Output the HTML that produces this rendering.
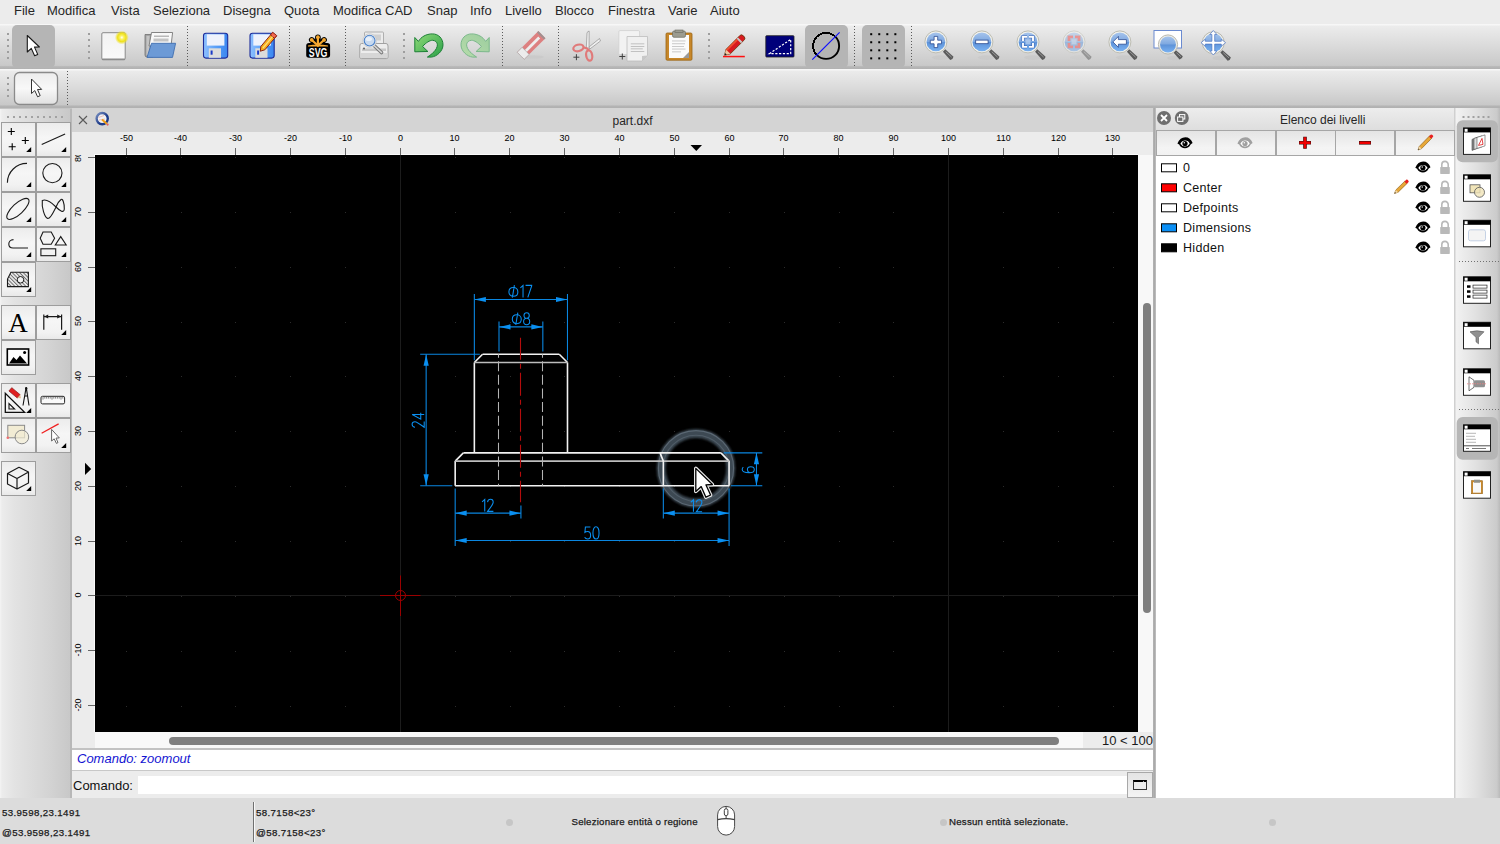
<!DOCTYPE html><html><head><meta charset="utf-8"><style>
*{box-sizing:border-box}
html,body{margin:0;padding:0}
body{width:1500px;height:844px;position:relative;overflow:hidden;background:#ececec;font-family:"Liberation Sans",sans-serif;color:#222}
.a{position:absolute}
.menu span{position:absolute;top:3px;font-size:13px;color:#262626;line-height:16px;white-space:nowrap}
.tb{position:absolute;left:0;width:1500px}
.sep{position:absolute;width:1px;border-left:1px dotted #6a6a6a}
.hd{position:absolute;width:2px;height:2px;background:#9c9c9c}
.lb{position:absolute;width:34px;height:34px;border:1px solid #9a9a9a;background:linear-gradient(#f7f7f7,#ebebeb 50%,#e6e6e6)}
.lb svg{position:absolute;left:0;top:0}
.tri{position:absolute;right:3px;bottom:3px;width:0;height:0;border-left:6px solid transparent;border-bottom:6px solid #000}
.st{position:absolute;font-size:9.7px;color:#1a1a1a;white-space:nowrap;line-height:12px;-webkit-text-stroke:0.25px #1a1a1a}
.rl{position:absolute;font-size:9px;color:#000;line-height:10px;white-space:nowrap}
.lay{position:absolute;left:1183px;font-size:12.5px;letter-spacing:0.3px;color:#111;line-height:16px}
.sw{position:absolute;left:1161px;width:16px;height:9px;border:1px solid #000}
.eye{position:absolute;left:1415px}
.lock{position:absolute;left:1440px}
</style></head><body>
<div class="a menu" style="left:0;top:0;width:1500px;height:24px;background:#ececec">
<span style="left:14px">File</span>
<span style="left:47px">Modifica</span>
<span style="left:111px">Vista</span>
<span style="left:153px">Seleziona</span>
<span style="left:223px">Disegna</span>
<span style="left:284px">Quota</span>
<span style="left:333px">Modifica CAD</span>
<span style="left:427px">Snap</span>
<span style="left:470px">Info</span>
<span style="left:505px">Livello</span>
<span style="left:555px">Blocco</span>
<span style="left:608px">Finestra</span>
<span style="left:668px">Varie</span>
<span style="left:710px">Aiuto</span>
</div>
<div class="tb" style="top:24px;height:45px;background:linear-gradient(#f7f7f7 0px,#f7f7f7 1px,#ececec 2px,#dcdcdc 45%,#c9c9c9 92%,#b6b6b6 95%,#b2b2b2 100%)"></div>
<div class="tb" style="top:69px;height:39px;background:linear-gradient(#f7f7f7 0px,#f7f7f7 1px,#ebebeb 2px,#dadada 50%,#c8c8c8 92%,#b4b4b4 95%,#b0b0b0 100%)"></div>
<svg class="a" style="left:0;top:24px" width="1500" height="84" viewBox="0 24 1500 84">
<defs>
<linearGradient id="gBlue" x1="0" y1="0" x2="0" y2="1"><stop offset="0" stop-color="#a6c4ec"/><stop offset="0.48" stop-color="#7ea8e0"/><stop offset="0.52" stop-color="#5d92d8"/><stop offset="1" stop-color="#7ab2f2"/></linearGradient>
<radialGradient id="gGlow"><stop offset="0" stop-color="#ffffff"/><stop offset="0.25" stop-color="#fbf36a"/><stop offset="0.6" stop-color="#efe11a"/><stop offset="1" stop-color="#f0e020" stop-opacity="0"/></radialGradient>
<linearGradient id="gGreen" x1="0" y1="0" x2="1" y2="1"><stop offset="0" stop-color="#8fda78"/><stop offset="1" stop-color="#2aa048"/></linearGradient>
<linearGradient id="gGreenL" x1="0" y1="0" x2="1" y2="1"><stop offset="0" stop-color="#9ccd9e"/><stop offset="1" stop-color="#b6dcab"/></linearGradient>
<linearGradient id="gPaper" x1="0" y1="0" x2="0" y2="1"><stop offset="0" stop-color="#f2f2f2"/><stop offset="1" stop-color="#fafafa"/></linearGradient>
<linearGradient id="gFloppy" x1="0" y1="0" x2="1" y2="0"><stop offset="0" stop-color="#8ec0ff"/><stop offset="0.5" stop-color="#5aa0f8"/><stop offset="1" stop-color="#3a86f0"/></linearGradient>
</defs>
<rect x="7" y="33" width="2" height="2" fill="#9e9e9e"/><rect x="7" y="39" width="2" height="2" fill="#9e9e9e"/><rect x="7" y="45" width="2" height="2" fill="#9e9e9e"/><rect x="7" y="51" width="2" height="2" fill="#9e9e9e"/><rect x="7" y="57" width="2" height="2" fill="#9e9e9e"/>
<rect x="88" y="33" width="2" height="2" fill="#9e9e9e"/><rect x="88" y="39" width="2" height="2" fill="#9e9e9e"/><rect x="88" y="45" width="2" height="2" fill="#9e9e9e"/><rect x="88" y="51" width="2" height="2" fill="#9e9e9e"/><rect x="88" y="57" width="2" height="2" fill="#9e9e9e"/>
<rect x="187" y="26" width="1" height="1" fill="#5a5a5a"/><rect x="187" y="29" width="1" height="1" fill="#5a5a5a"/><rect x="187" y="32" width="1" height="1" fill="#5a5a5a"/><rect x="187" y="35" width="1" height="1" fill="#5a5a5a"/><rect x="187" y="38" width="1" height="1" fill="#5a5a5a"/><rect x="187" y="41" width="1" height="1" fill="#5a5a5a"/><rect x="187" y="44" width="1" height="1" fill="#5a5a5a"/><rect x="187" y="47" width="1" height="1" fill="#5a5a5a"/><rect x="187" y="50" width="1" height="1" fill="#5a5a5a"/><rect x="187" y="53" width="1" height="1" fill="#5a5a5a"/><rect x="187" y="56" width="1" height="1" fill="#5a5a5a"/><rect x="187" y="59" width="1" height="1" fill="#5a5a5a"/><rect x="187" y="62" width="1" height="1" fill="#5a5a5a"/><rect x="187" y="65" width="1" height="1" fill="#5a5a5a"/>
<rect x="289" y="26" width="1" height="1" fill="#5a5a5a"/><rect x="289" y="29" width="1" height="1" fill="#5a5a5a"/><rect x="289" y="32" width="1" height="1" fill="#5a5a5a"/><rect x="289" y="35" width="1" height="1" fill="#5a5a5a"/><rect x="289" y="38" width="1" height="1" fill="#5a5a5a"/><rect x="289" y="41" width="1" height="1" fill="#5a5a5a"/><rect x="289" y="44" width="1" height="1" fill="#5a5a5a"/><rect x="289" y="47" width="1" height="1" fill="#5a5a5a"/><rect x="289" y="50" width="1" height="1" fill="#5a5a5a"/><rect x="289" y="53" width="1" height="1" fill="#5a5a5a"/><rect x="289" y="56" width="1" height="1" fill="#5a5a5a"/><rect x="289" y="59" width="1" height="1" fill="#5a5a5a"/><rect x="289" y="62" width="1" height="1" fill="#5a5a5a"/><rect x="289" y="65" width="1" height="1" fill="#5a5a5a"/>
<rect x="345" y="26" width="1" height="1" fill="#5a5a5a"/><rect x="345" y="29" width="1" height="1" fill="#5a5a5a"/><rect x="345" y="32" width="1" height="1" fill="#5a5a5a"/><rect x="345" y="35" width="1" height="1" fill="#5a5a5a"/><rect x="345" y="38" width="1" height="1" fill="#5a5a5a"/><rect x="345" y="41" width="1" height="1" fill="#5a5a5a"/><rect x="345" y="44" width="1" height="1" fill="#5a5a5a"/><rect x="345" y="47" width="1" height="1" fill="#5a5a5a"/><rect x="345" y="50" width="1" height="1" fill="#5a5a5a"/><rect x="345" y="53" width="1" height="1" fill="#5a5a5a"/><rect x="345" y="56" width="1" height="1" fill="#5a5a5a"/><rect x="345" y="59" width="1" height="1" fill="#5a5a5a"/><rect x="345" y="62" width="1" height="1" fill="#5a5a5a"/><rect x="345" y="65" width="1" height="1" fill="#5a5a5a"/>
<rect x="403" y="33" width="2" height="2" fill="#9e9e9e"/><rect x="403" y="39" width="2" height="2" fill="#9e9e9e"/><rect x="403" y="45" width="2" height="2" fill="#9e9e9e"/><rect x="403" y="51" width="2" height="2" fill="#9e9e9e"/><rect x="403" y="57" width="2" height="2" fill="#9e9e9e"/>
<rect x="502" y="26" width="1" height="1" fill="#5a5a5a"/><rect x="502" y="29" width="1" height="1" fill="#5a5a5a"/><rect x="502" y="32" width="1" height="1" fill="#5a5a5a"/><rect x="502" y="35" width="1" height="1" fill="#5a5a5a"/><rect x="502" y="38" width="1" height="1" fill="#5a5a5a"/><rect x="502" y="41" width="1" height="1" fill="#5a5a5a"/><rect x="502" y="44" width="1" height="1" fill="#5a5a5a"/><rect x="502" y="47" width="1" height="1" fill="#5a5a5a"/><rect x="502" y="50" width="1" height="1" fill="#5a5a5a"/><rect x="502" y="53" width="1" height="1" fill="#5a5a5a"/><rect x="502" y="56" width="1" height="1" fill="#5a5a5a"/><rect x="502" y="59" width="1" height="1" fill="#5a5a5a"/><rect x="502" y="62" width="1" height="1" fill="#5a5a5a"/><rect x="502" y="65" width="1" height="1" fill="#5a5a5a"/>
<rect x="558" y="26" width="1" height="1" fill="#5a5a5a"/><rect x="558" y="29" width="1" height="1" fill="#5a5a5a"/><rect x="558" y="32" width="1" height="1" fill="#5a5a5a"/><rect x="558" y="35" width="1" height="1" fill="#5a5a5a"/><rect x="558" y="38" width="1" height="1" fill="#5a5a5a"/><rect x="558" y="41" width="1" height="1" fill="#5a5a5a"/><rect x="558" y="44" width="1" height="1" fill="#5a5a5a"/><rect x="558" y="47" width="1" height="1" fill="#5a5a5a"/><rect x="558" y="50" width="1" height="1" fill="#5a5a5a"/><rect x="558" y="53" width="1" height="1" fill="#5a5a5a"/><rect x="558" y="56" width="1" height="1" fill="#5a5a5a"/><rect x="558" y="59" width="1" height="1" fill="#5a5a5a"/><rect x="558" y="62" width="1" height="1" fill="#5a5a5a"/><rect x="558" y="65" width="1" height="1" fill="#5a5a5a"/>
<rect x="708" y="33" width="2" height="2" fill="#9e9e9e"/><rect x="708" y="39" width="2" height="2" fill="#9e9e9e"/><rect x="708" y="45" width="2" height="2" fill="#9e9e9e"/><rect x="708" y="51" width="2" height="2" fill="#9e9e9e"/><rect x="708" y="57" width="2" height="2" fill="#9e9e9e"/>
<rect x="854" y="26" width="1" height="1" fill="#5a5a5a"/><rect x="854" y="29" width="1" height="1" fill="#5a5a5a"/><rect x="854" y="32" width="1" height="1" fill="#5a5a5a"/><rect x="854" y="35" width="1" height="1" fill="#5a5a5a"/><rect x="854" y="38" width="1" height="1" fill="#5a5a5a"/><rect x="854" y="41" width="1" height="1" fill="#5a5a5a"/><rect x="854" y="44" width="1" height="1" fill="#5a5a5a"/><rect x="854" y="47" width="1" height="1" fill="#5a5a5a"/><rect x="854" y="50" width="1" height="1" fill="#5a5a5a"/><rect x="854" y="53" width="1" height="1" fill="#5a5a5a"/><rect x="854" y="56" width="1" height="1" fill="#5a5a5a"/><rect x="854" y="59" width="1" height="1" fill="#5a5a5a"/><rect x="854" y="62" width="1" height="1" fill="#5a5a5a"/><rect x="854" y="65" width="1" height="1" fill="#5a5a5a"/>
<rect x="911" y="26" width="1" height="1" fill="#5a5a5a"/><rect x="911" y="29" width="1" height="1" fill="#5a5a5a"/><rect x="911" y="32" width="1" height="1" fill="#5a5a5a"/><rect x="911" y="35" width="1" height="1" fill="#5a5a5a"/><rect x="911" y="38" width="1" height="1" fill="#5a5a5a"/><rect x="911" y="41" width="1" height="1" fill="#5a5a5a"/><rect x="911" y="44" width="1" height="1" fill="#5a5a5a"/><rect x="911" y="47" width="1" height="1" fill="#5a5a5a"/><rect x="911" y="50" width="1" height="1" fill="#5a5a5a"/><rect x="911" y="53" width="1" height="1" fill="#5a5a5a"/><rect x="911" y="56" width="1" height="1" fill="#5a5a5a"/><rect x="911" y="59" width="1" height="1" fill="#5a5a5a"/><rect x="911" y="62" width="1" height="1" fill="#5a5a5a"/><rect x="911" y="65" width="1" height="1" fill="#5a5a5a"/>
<rect x="7" y="77" width="2" height="2" fill="#9e9e9e"/><rect x="7" y="83" width="2" height="2" fill="#9e9e9e"/><rect x="7" y="89" width="2" height="2" fill="#9e9e9e"/><rect x="7" y="95" width="2" height="2" fill="#9e9e9e"/>
<rect x="67" y="71" width="1" height="1" fill="#5a5a5a"/><rect x="67" y="74" width="1" height="1" fill="#5a5a5a"/><rect x="67" y="77" width="1" height="1" fill="#5a5a5a"/><rect x="67" y="80" width="1" height="1" fill="#5a5a5a"/><rect x="67" y="83" width="1" height="1" fill="#5a5a5a"/><rect x="67" y="86" width="1" height="1" fill="#5a5a5a"/><rect x="67" y="89" width="1" height="1" fill="#5a5a5a"/><rect x="67" y="92" width="1" height="1" fill="#5a5a5a"/><rect x="67" y="95" width="1" height="1" fill="#5a5a5a"/><rect x="67" y="98" width="1" height="1" fill="#5a5a5a"/><rect x="67" y="101" width="1" height="1" fill="#5a5a5a"/><rect x="67" y="104" width="1" height="1" fill="#5a5a5a"/>
<rect x="12" y="25" width="43" height="43" rx="5" fill="#b5b5b5"/>
<rect x="805" y="25" width="43" height="43" rx="5" fill="#b5b5b5"/>
<rect x="862" y="25" width="43" height="43" rx="5" fill="#b5b5b5"/>
<path d="M27.3,35.5 L27.3,52 L31.3,48.4 L34.6,55.8 L37.7,54.4 L34.5,47.1 L39.4,47 Z" fill="#fff" stroke="#1a1a1a" stroke-width="1.1" stroke-linejoin="round"/>
<rect x="14.5" y="72.5" width="43" height="32" rx="5" fill="url(#gTb2btn)" stroke="#8a8a8a" stroke-width="1.3"/>
<defs><linearGradient id="gTb2btn" x1="0" y1="0" x2="0" y2="1"><stop offset="0" stop-color="#ececec"/><stop offset="0.5" stop-color="#f8f8f8"/><stop offset="1" stop-color="#e0e0e0"/></linearGradient></defs>
<path d="M31.5,79 L31.5,93.5 L34.8,90.6 L37.6,96.8 L40.2,95.6 L37.5,89.5 L41.7,89.4 Z" fill="#fff" stroke="#333" stroke-width="1" stroke-linejoin="round"/>
<rect x="101.8" y="32.7" width="23.4" height="27" rx="1.2" fill="url(#gPaper)" stroke="#8a8a8a" stroke-width="1"/>
<rect x="102" y="58.5" width="23" height="1.6" fill="#8c8c8c"/>
<circle cx="121.8" cy="37.5" r="7" fill="url(#gGlow)"/>
<path d="M145,34.5 L153,34.5 L153,57 L147,57 Q145,57 145,55 Z" fill="#a4a4a4" stroke="#707070" stroke-width="0.8"/><rect x="146.5" y="36" width="3" height="19" fill="#c4c4c4"/>
<path d="M151.5,32.5 L172.6,32.5 L171,46 L149,46 Z" fill="#f8f8f8" stroke="#777" stroke-width="0.9"/>
<rect x="154" y="35.5" width="15" height="1.5" fill="#b8b8b8"/><rect x="153.5" y="38.5" width="15" height="3" fill="#c4c4c4"/>
<path d="M151.5,43.3 L175.6,43.3 L172.5,57.4 L147,57.4 Z" fill="#6c9ad6" stroke="#3f6eb0" stroke-width="0.9" stroke-linejoin="round"/>
<rect x="203.5" y="33.3" width="24.2" height="24.8" rx="2.5" fill="url(#gFloppy)" stroke="#1c2c9a" stroke-width="1.1"/><rect x="206.8" y="34.3" width="17.6" height="11.3" fill="#eef2fc"/><rect x="208.8" y="48.3" width="12.2" height="9.5" fill="#dcdcdc"/><rect x="210.6" y="50.5" width="2" height="4.2" fill="#1a3ac8"/>
<rect x="250.0" y="33.3" width="24.2" height="24.8" rx="2.5" fill="url(#gFloppy)" stroke="#1c2c9a" stroke-width="1.1"/><rect x="253.3" y="34.3" width="17.6" height="11.3" fill="#eef2fc"/><rect x="255.3" y="48.3" width="12.2" height="9.5" fill="#dcdcdc"/><rect x="257.1" y="50.5" width="2" height="4.2" fill="#1a3ac8"/>
<g transform="translate(268,42) rotate(-50)"><path d="M-12,0 L-8,-2.6 L10,-2.6 L10,2.6 L-8,2.6 Z" fill="#f8b020" stroke="#8a2010" stroke-width="0.9"/><rect x="7" y="-2.6" width="3.5" height="5.2" fill="#f46a50" stroke="#8a2010" stroke-width="0.9"/><rect x="-8" y="-0.6" width="15" height="1.2" fill="#ffe080"/></g>
<line x1="317.9" y1="45.5" x2="311.73" y2="39.95" stroke="#000" stroke-width="5.6" stroke-linecap="round"/>
<line x1="317.9" y1="45.5" x2="317.90" y2="37.20" stroke="#000" stroke-width="5.6" stroke-linecap="round"/>
<line x1="317.9" y1="45.5" x2="324.07" y2="39.95" stroke="#000" stroke-width="5.6" stroke-linecap="round"/>
<rect x="306.2" y="42.9" width="23.9" height="14.9" rx="2.8" fill="#000"/>
<line x1="317.9" y1="45.5" x2="311.73" y2="39.95" stroke="#f5a830" stroke-width="2.2" stroke-linecap="round"/>
<circle cx="311.73" cy="39.95" r="1.9" fill="#f5a830"/>
<line x1="317.9" y1="45.5" x2="317.90" y2="37.20" stroke="#f5a830" stroke-width="2.2" stroke-linecap="round"/>
<circle cx="317.90" cy="37.20" r="1.9" fill="#f5a830"/>
<line x1="317.9" y1="45.5" x2="324.07" y2="39.95" stroke="#f5a830" stroke-width="2.2" stroke-linecap="round"/>
<circle cx="324.07" cy="39.95" r="1.9" fill="#f5a830"/>
<path d="M308,45.6 Q318,43.6 328,45.6 L328,46.4 L308,46.4 Z" fill="#f5a830"/>
<text x="318.1" y="57.1" text-anchor="middle" font-family="Liberation Sans" font-weight="bold" font-size="13.4" fill="#fff" textLength="18.6" lengthAdjust="spacingAndGlyphs">SVG</text>
<rect x="364.5" y="32" width="19" height="14" rx="1" fill="#ececec" stroke="#a8a8a8" stroke-width="0.9"/>
<rect x="372" y="34.5" width="9" height="6" fill="#d0d0d0"/>
<path d="M361.5,43.5 L386,43.5 Q388,43.5 388,46 L388,57 Q388,58.6 386.5,58.6 L361.3,58.6 Q359.8,58.6 359.8,57 L359.8,46 Q359.8,43.5 361.5,43.5 Z" fill="#ededed" stroke="#9a9a9a" stroke-width="0.9"/>
<rect x="360.5" y="53" width="27" height="5" fill="#d6d6d6"/>
<rect x="362" y="48.5" width="24" height="2.5" fill="#c8c8c8"/>
<circle cx="364" cy="48.5" r="0.9" fill="#555"/>
<line x1="373.5" y1="45" x2="381.5" y2="52.5" stroke="#7a7a7a" stroke-width="3.6" stroke-linecap="round"/>
<line x1="373.5" y1="45" x2="381.5" y2="52.5" stroke="#d8d8d8" stroke-width="1.6" stroke-linecap="round"/>
<circle cx="369.6" cy="40.6" r="6.8" fill="#f6f6f6" stroke="#c4c4c4" stroke-width="0.8"/>
<circle cx="369.6" cy="40.6" r="5.4" fill="#c8daf0" stroke="#4a80c8" stroke-width="1.1"/>
<ellipse cx="368.8" cy="39" rx="3.2" ry="2" fill="#e8f0fa"/>
<path d="M414.8,37.5 L418.4,41.4 C421,37 426,33.9 432.4,33.9 C438.5,33.9 443,38.5 443,44.8 C443,51 437,56.5 431.3,57.1 L427.4,57.1 C432,54 437.2,50 437.4,44.8 C437.4,42 435,40.3 432.4,40.3 C430,40.3 426,42.5 422.6,46.5 L427.9,51.5 L414.8,51.8 Z" fill="url(#gGreen)" stroke="#1b8034" stroke-width="1" stroke-linejoin="round"/>
<path d="M414.8,37.5 L418.4,41.4 C421,37 426,33.9 432.4,33.9 C438.5,33.9 443,38.5 443,44.8 C443,51 437,56.5 431.3,57.1 L427.4,57.1 C432,54 437.2,50 437.4,44.8 C437.4,42 435,40.3 432.4,40.3 C430,40.3 426,42.5 422.6,46.5 L427.9,51.5 L414.8,51.8 Z" fill="url(#gGreenL)" stroke="#7ab88a" stroke-width="1" stroke-linejoin="round" transform="translate(904,0) scale(-1,1)"/>
<ellipse cx="532" cy="57" rx="12" ry="1.8" fill="#c8c8c8" opacity="0.7"/>
<g transform="translate(531.3,45.2) rotate(-45)"><rect x="-15" y="-5" width="30" height="10" fill="#dd8080"/><rect x="-15" y="-1.2" width="26" height="2.8" fill="#eeeeee"/><rect x="-15" y="-5" width="7" height="10" fill="#ececec" stroke="#a0a0a0" stroke-width="0.6"/><rect x="13" y="-5" width="2" height="10" fill="#a09090"/></g>
<path d="M586.3,48 L587,33 Q587.6,31 589.2,31.2 L589,50 Z" fill="#f0f0f0" stroke="#909090" stroke-width="0.7"/>
<path d="M589,47 L599.5,38.5 L600.5,41 L589.8,49 Z" fill="#f0f0f0" stroke="#909090" stroke-width="0.7"/>
<ellipse cx="578.4" cy="47.9" rx="5.2" ry="3.2" transform="rotate(-15 578.4 47.9)" fill="none" stroke="#e07a7a" stroke-width="2.2"/>
<ellipse cx="589.2" cy="55.5" rx="3" ry="5.2" transform="rotate(-10 589.2 55.5)" fill="none" stroke="#e07a7a" stroke-width="2.2"/>
<path d="M583,47.3 L587.2,48.5 L588.7,50.5" fill="none" stroke="#e07a7a" stroke-width="2.2"/>
<path d="M573.4,57.2 h6 M576.4,54.2 v6" stroke="#404040" stroke-width="1"/>
<rect x="618.8" y="30.6" width="20.8" height="24" rx="1.2" fill="#f2f2f2" stroke="#cfcfcf" stroke-width="0.8"/>
<path d="M627,36.5 L647.5,36.5 L647.5,55.5 L642,61 L627,61 Z" fill="#f0f0f0" stroke="#bcbcbc" stroke-width="0.8"/>
<path d="M642,61 L642,56 L647.5,55.5 Z" fill="#c8c8c8"/>
<rect x="630.8" y="43.4" width="13.5" height="0.9" fill="#bcbcbc"/>
<rect x="630.8" y="46" width="13.5" height="0.9" fill="#bcbcbc"/>
<rect x="630.8" y="48.4" width="12" height="0.9" fill="#bcbcbc"/>
<rect x="630.8" y="51" width="13.5" height="0.9" fill="#bcbcbc"/>
<path d="M619.3,56.5 h6 M622.3,53.5 v6" stroke="#404040" stroke-width="1"/>
<rect x="666" y="33" width="26" height="27.2" rx="1.2" fill="#c7872a" stroke="#9a6414" stroke-width="0.8"/>
<rect x="669" y="35" width="20" height="23" fill="#fbfbfb"/>
<path d="M683,58 L689,52 L689,58 Z" fill="#9a9a9a"/>
<rect x="672" y="40.5" width="13.5" height="0.9" fill="#c4c4c4"/>
<rect x="672" y="43.3" width="13" height="0.9" fill="#c4c4c4"/>
<rect x="672" y="46" width="12" height="0.9" fill="#c4c4c4"/>
<rect x="672" y="48.6" width="13.5" height="0.9" fill="#c4c4c4"/>
<rect x="672" y="51.4" width="9" height="0.9" fill="#c4c4c4"/>
<rect x="672.5" y="31" width="13" height="6.3" rx="1.5" fill="#9c9c90" stroke="#6a6a60" stroke-width="0.7"/>
<rect x="675" y="30" width="8" height="2.5" fill="#9c9c90" stroke="#6a6a60" stroke-width="0.6"/>
<rect x="723" y="55.8" width="21.8" height="1.5" fill="#ff1010"/>
<g transform="translate(734.5,45.3) rotate(-45)"><path d="M-14,0 L-9,-3.1 L11,-3.1 Q13,-3.1 13,0 Q13,3.1 11,3.1 L-9,3.1 Z" fill="#d81a20" stroke="#6a3a10" stroke-width="0.8"/><path d="M-14,0 L-9,-3.1 L-9,3.1 Z" fill="#f0c8a0"/><path d="M-14,0 L-12,-1.2 L-12,1.2 Z" fill="#202020"/><rect x="6" y="-3.1" width="2" height="6.2" fill="#c8c8c8"/><rect x="-9" y="-3" width="15" height="1.8" fill="#f05030"/></g>
<rect x="765.8" y="35.7" width="28.2" height="21.3" rx="0.8" fill="#00007a" stroke="#222" stroke-width="0.8"/>
<path d="M769.4,53.7 L790.7,39.4 L790.7,53.7 Z" fill="none" stroke="#fff" stroke-width="1.2" stroke-dasharray="2.2 1.6"/>
<path d="M816.9,55.1 A13,13 0 0 0 835.3,36.7" fill="none" stroke="#000" stroke-width="1.9"/>
<path d="M816.9,55.1 A13,13 0 0 1 835.3,36.7" fill="none" stroke="#000" stroke-width="1.9" shape-rendering="crispEdges"/>
<line x1="812.3" y1="59.6" x2="839.6" y2="32.3" stroke="#1010ff" stroke-width="1.2"/>
<rect x="870.20" y="33.20" width="2" height="2" fill="#000"/>
<rect x="870.20" y="41.25" width="2" height="2" fill="#000"/>
<rect x="870.20" y="49.30" width="2" height="2" fill="#000"/>
<rect x="870.20" y="57.35" width="2" height="2" fill="#000"/>
<rect x="878.25" y="33.20" width="2" height="2" fill="#000"/>
<rect x="878.25" y="41.25" width="2" height="2" fill="#000"/>
<rect x="878.25" y="49.30" width="2" height="2" fill="#000"/>
<rect x="878.25" y="57.35" width="2" height="2" fill="#000"/>
<rect x="886.30" y="33.20" width="2" height="2" fill="#000"/>
<rect x="886.30" y="41.25" width="2" height="2" fill="#000"/>
<rect x="886.30" y="49.30" width="2" height="2" fill="#000"/>
<rect x="886.30" y="57.35" width="2" height="2" fill="#000"/>
<rect x="894.35" y="33.20" width="2" height="2" fill="#000"/>
<rect x="894.35" y="41.25" width="2" height="2" fill="#000"/>
<rect x="894.35" y="49.30" width="2" height="2" fill="#000"/>
<rect x="894.35" y="57.35" width="2" height="2" fill="#000"/>
<g><ellipse cx="940.9" cy="57.5" rx="9" ry="2.2" fill="#b8b8b8" opacity="0.25"/><g transform="translate(944.1,50.5) rotate(45)"><path d="M0,-1.6 L11,-2.3 Q12.5,0 11,2.3 L0,1.6 Z" fill="#5a5a5a"/><path d="M2,-0.3 L10,-0.6" stroke="#9a9a9a" stroke-width="0.9"/></g><circle cx="935.9" cy="41.9" r="11" fill="#f2f2ec" stroke="#bcbcb2" stroke-width="1"/><circle cx="935.9" cy="41.9" r="9.4" fill="url(#gBlue)"/><path d="M930.3,40.2 h3.8 v-3.8 h3.6 v3.8 h3.8 v3.6 h-3.8 v3.8 h-3.6 v-3.8 h-3.8 Z" fill="#fff" stroke="#2a4a90" stroke-width="0.8"/></g>
<g><ellipse cx="986.9" cy="57.5" rx="9" ry="2.2" fill="#b8b8b8" opacity="0.25"/><g transform="translate(990.1,50.5) rotate(45)"><path d="M0,-1.6 L11,-2.3 Q12.5,0 11,2.3 L0,1.6 Z" fill="#5a5a5a"/><path d="M2,-0.3 L10,-0.6" stroke="#9a9a9a" stroke-width="0.9"/></g><circle cx="981.9" cy="41.9" r="11" fill="#f2f2ec" stroke="#bcbcb2" stroke-width="1"/><circle cx="981.9" cy="41.9" r="9.4" fill="url(#gBlue)"/><rect x="975.6999999999999" y="40.1" width="12.4" height="3.6" fill="#fff" stroke="#2a4a90" stroke-width="0.8"/></g>
<g><ellipse cx="1033" cy="57.5" rx="9" ry="2.2" fill="#b8b8b8" opacity="0.25"/><g transform="translate(1036.2,50.5) rotate(45)"><path d="M0,-1.6 L11,-2.3 Q12.5,0 11,2.3 L0,1.6 Z" fill="#5a5a5a"/><path d="M2,-0.3 L10,-0.6" stroke="#9a9a9a" stroke-width="0.9"/></g><circle cx="1028" cy="41.9" r="11" fill="#f2f2ec" stroke="#bcbcb2" stroke-width="1"/><circle cx="1028" cy="41.9" r="9.4" fill="url(#gBlue)"/><rect x="1025.5" y="39.4" width="5" height="5" fill="#b4cdee" opacity="0.8"/><path d="M1023,40.9 v-4 h4 M1029,36.9 h4 v4 M1033,42.9 v4 h-4 M1027,46.9 h-4 v-4" fill="none" stroke="#3a62b0" stroke-width="2.9"/><path d="M1023,40.9 v-4 h4 M1029,36.9 h4 v4 M1033,42.9 v4 h-4 M1027,46.9 h-4 v-4" fill="none" stroke="#fff" stroke-width="1.9"/></g>
<g opacity="0.5"><ellipse cx="1079" cy="57.5" rx="9" ry="2.2" fill="#b8b8b8" opacity="0.25"/><g transform="translate(1082.2,50.5) rotate(45)"><path d="M0,-1.6 L11,-2.3 Q12.5,0 11,2.3 L0,1.6 Z" fill="#5a5a5a"/><path d="M2,-0.3 L10,-0.6" stroke="#9a9a9a" stroke-width="0.9"/></g><circle cx="1074" cy="41.9" r="11" fill="#f2f2ec" stroke="#bcbcb2" stroke-width="1"/><circle cx="1074" cy="41.9" r="9.4" fill="url(#gBlue)"/><rect x="1071.5" y="39.4" width="5" height="5" fill="#b4cdee" opacity="0.8"/><path d="M1069,40.9 v-4 h4 M1075,36.9 h4 v4 M1079,42.9 v4 h-4 M1073,46.9 h-4 v-4" fill="none" stroke="#d06060" stroke-width="2.9"/><path d="M1069,40.9 v-4 h4 M1075,36.9 h4 v4 M1079,42.9 v4 h-4 M1073,46.9 h-4 v-4" fill="none" stroke="#f04848" stroke-width="1.9"/></g>
<g><ellipse cx="1124.9" cy="57.5" rx="9" ry="2.2" fill="#b8b8b8" opacity="0.25"/><g transform="translate(1128.1000000000001,50.5) rotate(45)"><path d="M0,-1.6 L11,-2.3 Q12.5,0 11,2.3 L0,1.6 Z" fill="#5a5a5a"/><path d="M2,-0.3 L10,-0.6" stroke="#9a9a9a" stroke-width="0.9"/></g><circle cx="1119.9" cy="41.9" r="11" fill="#f2f2ec" stroke="#bcbcb2" stroke-width="1"/><circle cx="1119.9" cy="41.9" r="9.4" fill="url(#gBlue)"/><path d="M1112.9,41.9 L1118.4,36.4 L1118.4,39.6 L1126.4,39.6 L1126.4,44.2 L1118.4,44.2 L1118.4,47.4 Z" fill="#fff" stroke="#2a4a90" stroke-width="0.8"/></g>
<rect x="1154" y="30.5" width="27.5" height="17.5" fill="#fff" stroke="#6a8ad0" stroke-width="1"/>
<ellipse cx="1175" cy="58" rx="8" ry="2.2" fill="#b8b8b8" opacity="0.3"/>
<g transform="translate(1174.8,51.5) rotate(45)"><path d="M0,-1.6 L9,-2.3 Q10.5,0 9,2.3 L0,1.6 Z" fill="#5a5a5a"/><path d="M2,-0.3 L8,-0.6" stroke="#9a9a9a" stroke-width="0.9"/></g>
<circle cx="1168" cy="44.5" r="9.6" fill="#ecece6" stroke="#b8b8b0" stroke-width="1"/>
<circle cx="1168" cy="44.5" r="8" fill="url(#gBlue)"/>
<ellipse cx="1220.3" cy="58" rx="8" ry="2.2" fill="#b8b8b8" opacity="0.3"/>
<g transform="translate(1221.5,51.3) rotate(45)"><path d="M0,-1.6 L11,-2.3 Q12.5,0 11,2.3 L0,1.6 Z" fill="#5a5a5a"/><path d="M2,-0.3 L10,-0.6" stroke="#9a9a9a" stroke-width="0.9"/></g>
<circle cx="1213.3" cy="42.7" r="11" fill="#f0f0ea" stroke="#b8b8b0" stroke-width="1"/>
<circle cx="1213.3" cy="42.7" r="9.4" fill="url(#gBlue)"/>
<path d="M1213.3,30.5 L1216.8,34.5 L1214.7,34.5 L1214.7,41.3 L1221.3,41.3 L1221.3,39.2 L1225.6,42.7 L1221.3,46.2 L1221.3,44.1 L1214.7,44.1 L1214.7,51 L1216.8,51 L1213.3,55 L1209.8,51 L1211.8999999999999,51 L1211.8999999999999,44.1 L1205.3,44.1 L1205.3,46.2 L1201.0,42.7 L1205.3,39.2 L1205.3,41.3 L1211.8999999999999,41.3 L1211.8999999999999,34.5 L1209.8,34.5 Z" fill="#fff" stroke="#4a72c0" stroke-width="0.7"/>
</svg>
<div class="a" style="left:0;top:108px;width:72px;height:690px;background:linear-gradient(90deg,#f4f4f4 0,#ececec 2px,#e3e3e3 14px,#d3d3d3 50px,#c8c8c8 70px,#b8b8b8 70px,#b8b8b8 72px)"></div>
<div class="a" style="left:0;top:108px;width:72px;height:1px;background:#c4c4c4"></div>
<div class="a" style="left:72px;top:108px;width:1082px;height:24px;background:#d4d4d4"></div>
<div class="a" style="left:600px;top:114px;font-size:12px;color:#262626;line-height:15px;width:65px;text-align:center">part.dxf</div>
<div class="a" style="left:72px;top:132px;width:1082px;height:600px;background:#ececec"></div>
<div class="a" style="left:94px;top:154px;width:1044px;height:578px;background:#fafafa"></div>
<div class="a" style="left:95px;top:155px;width:1043px;height:577px;background:#000"></div>
<div class="a" style="left:1138px;top:155px;width:16px;height:577px;background:#f8f8f8"></div>
<div class="a" style="left:1143px;top:303px;width:8px;height:310px;border-radius:4px;background:#7f7f7f"></div>
<div class="a" style="left:95px;top:732px;width:1059px;height:16px;background:#f8f8f8"></div>
<div class="a" style="left:1083px;top:732px;width:71px;height:16px;background:#ececec"></div>
<div class="a" style="left:169px;top:737px;width:890px;height:8px;border-radius:4px;background:#7f7f7f"></div>
<div class="a" style="left:1102px;top:733px;font-size:13px;line-height:16px;color:#1a1a1a">10 &lt; 100</div>
<div class="a" style="left:72px;top:748px;width:1082px;height:2px;background:#c2c2c2"></div>
<div class="a" style="left:72px;top:750px;width:1082px;height:21px;background:#fff;border-bottom:1px solid #c8c8c8"></div>
<div class="a" style="left:77px;top:750.5px;font-size:13px;line-height:16px;color:#1414d2;font-style:italic">Comando: zoomout</div>
<div class="a" style="left:72px;top:771px;width:1082px;height:27px;background:#ececec"></div>
<div class="a" style="left:73px;top:778px;font-size:13px;line-height:16px;color:#111">Comando:</div>
<div class="a" style="left:138px;top:776px;width:989px;height:18px;background:#fff"></div>
<div class="a" style="left:1127px;top:772px;width:26px;height:26px;border:1px solid #a8a8a8;background:linear-gradient(#e4e4e4,#f4f4f4)"></div>
<div class="a" style="left:1133px;top:780px;width:14px;height:10px;border:1px solid #333;border-top:2.5px solid #000;background:#ececec"></div><div class="a" style="left:1143px;top:780.8px;width:1px;height:1px;background:#aaa"></div>
<div class="a" style="left:95px;top:132px;width:1059px;height:23px;overflow:hidden">
<svg width="1059" height="23" viewBox="95 132 1059 23" style="position:absolute;left:0;top:0">
<line x1="126.50" y1="148.00" x2="126.50" y2="155.00" stroke="#666" stroke-width="1" />
<line x1="180.50" y1="148.00" x2="180.50" y2="155.00" stroke="#666" stroke-width="1" />
<line x1="235.50" y1="148.00" x2="235.50" y2="155.00" stroke="#666" stroke-width="1" />
<line x1="290.50" y1="148.00" x2="290.50" y2="155.00" stroke="#666" stroke-width="1" />
<line x1="345.50" y1="148.00" x2="345.50" y2="155.00" stroke="#666" stroke-width="1" />
<line x1="400.50" y1="148.00" x2="400.50" y2="155.00" stroke="#666" stroke-width="1" />
<line x1="454.50" y1="148.00" x2="454.50" y2="155.00" stroke="#666" stroke-width="1" />
<line x1="509.50" y1="148.00" x2="509.50" y2="155.00" stroke="#666" stroke-width="1" />
<line x1="564.50" y1="148.00" x2="564.50" y2="155.00" stroke="#666" stroke-width="1" />
<line x1="619.50" y1="148.00" x2="619.50" y2="155.00" stroke="#666" stroke-width="1" />
<line x1="674.50" y1="148.00" x2="674.50" y2="155.00" stroke="#666" stroke-width="1" />
<line x1="729.50" y1="148.00" x2="729.50" y2="155.00" stroke="#666" stroke-width="1" />
<line x1="783.50" y1="148.00" x2="783.50" y2="155.00" stroke="#666" stroke-width="1" />
<line x1="838.50" y1="148.00" x2="838.50" y2="155.00" stroke="#666" stroke-width="1" />
<line x1="893.50" y1="148.00" x2="893.50" y2="155.00" stroke="#666" stroke-width="1" />
<line x1="948.50" y1="148.00" x2="948.50" y2="155.00" stroke="#666" stroke-width="1" />
<line x1="1003.50" y1="148.00" x2="1003.50" y2="155.00" stroke="#666" stroke-width="1" />
<line x1="1058.50" y1="148.00" x2="1058.50" y2="155.00" stroke="#666" stroke-width="1" />
<line x1="1112.50" y1="148.00" x2="1112.50" y2="155.00" stroke="#666" stroke-width="1" />
<polygon points="690.5,145 702,145 696.3,151" fill="#000"/>
</svg>
<div class="rl" style="left:16.5px;top:0.5px;width:30px;text-align:center">-50</div>
<div class="rl" style="left:70.5px;top:0.5px;width:30px;text-align:center">-40</div>
<div class="rl" style="left:125.5px;top:0.5px;width:30px;text-align:center">-30</div>
<div class="rl" style="left:180.5px;top:0.5px;width:30px;text-align:center">-20</div>
<div class="rl" style="left:235.5px;top:0.5px;width:30px;text-align:center">-10</div>
<div class="rl" style="left:290.5px;top:0.5px;width:30px;text-align:center">0</div>
<div class="rl" style="left:344.5px;top:0.5px;width:30px;text-align:center">10</div>
<div class="rl" style="left:399.5px;top:0.5px;width:30px;text-align:center">20</div>
<div class="rl" style="left:454.5px;top:0.5px;width:30px;text-align:center">30</div>
<div class="rl" style="left:509.5px;top:0.5px;width:30px;text-align:center">40</div>
<div class="rl" style="left:564.5px;top:0.5px;width:30px;text-align:center">50</div>
<div class="rl" style="left:619.5px;top:0.5px;width:30px;text-align:center">60</div>
<div class="rl" style="left:673.5px;top:0.5px;width:30px;text-align:center">70</div>
<div class="rl" style="left:728.5px;top:0.5px;width:30px;text-align:center">80</div>
<div class="rl" style="left:783.5px;top:0.5px;width:30px;text-align:center">90</div>
<div class="rl" style="left:838.5px;top:0.5px;width:30px;text-align:center">100</div>
<div class="rl" style="left:893.5px;top:0.5px;width:30px;text-align:center">110</div>
<div class="rl" style="left:948.5px;top:0.5px;width:30px;text-align:center">120</div>
<div class="rl" style="left:1002.5px;top:0.5px;width:30px;text-align:center">130</div>
</div>
<div class="a" style="left:72px;top:155px;width:23px;height:577px;overflow:hidden">
<svg width="23" height="577" viewBox="72 155 23 577" style="position:absolute;left:0;top:0">
<line x1="88.00" y1="705.50" x2="95.00" y2="705.50" stroke="#666" stroke-width="1" />
<line x1="88.00" y1="650.50" x2="95.00" y2="650.50" stroke="#666" stroke-width="1" />
<line x1="88.00" y1="595.50" x2="95.00" y2="595.50" stroke="#666" stroke-width="1" />
<line x1="88.00" y1="541.50" x2="95.00" y2="541.50" stroke="#666" stroke-width="1" />
<line x1="88.00" y1="486.50" x2="95.00" y2="486.50" stroke="#666" stroke-width="1" />
<line x1="88.00" y1="431.50" x2="95.00" y2="431.50" stroke="#666" stroke-width="1" />
<line x1="88.00" y1="376.50" x2="95.00" y2="376.50" stroke="#666" stroke-width="1" />
<line x1="88.00" y1="321.50" x2="95.00" y2="321.50" stroke="#666" stroke-width="1" />
<line x1="88.00" y1="267.50" x2="95.00" y2="267.50" stroke="#666" stroke-width="1" />
<line x1="88.00" y1="212.50" x2="95.00" y2="212.50" stroke="#666" stroke-width="1" />
<line x1="88.00" y1="157.50" x2="95.00" y2="157.50" stroke="#666" stroke-width="1" />
<polygon points="85,462.8 85,475.1 91.2,468.9" fill="#000"/>
</svg>
<div class="rl" style="left:-8.8px;top:544.9px;width:30px;text-align:center;transform:rotate(-90deg)">-20</div>
<div class="rl" style="left:-8.8px;top:490.1px;width:30px;text-align:center;transform:rotate(-90deg)">-10</div>
<div class="rl" style="left:-8.8px;top:435.3px;width:30px;text-align:center;transform:rotate(-90deg)">0</div>
<div class="rl" style="left:-8.8px;top:380.5px;width:30px;text-align:center;transform:rotate(-90deg)">10</div>
<div class="rl" style="left:-8.8px;top:325.7px;width:30px;text-align:center;transform:rotate(-90deg)">20</div>
<div class="rl" style="left:-8.8px;top:271.0px;width:30px;text-align:center;transform:rotate(-90deg)">30</div>
<div class="rl" style="left:-8.8px;top:216.2px;width:30px;text-align:center;transform:rotate(-90deg)">40</div>
<div class="rl" style="left:-8.8px;top:161.4px;width:30px;text-align:center;transform:rotate(-90deg)">50</div>
<div class="rl" style="left:-8.8px;top:106.6px;width:30px;text-align:center;transform:rotate(-90deg)">60</div>
<div class="rl" style="left:-8.8px;top:51.8px;width:30px;text-align:center;transform:rotate(-90deg)">70</div>
<div class="rl" style="left:-8.8px;top:-2.9px;width:30px;text-align:center;transform:rotate(-90deg)">80</div>
</div>
<svg class="a" style="left:95px;top:155px" width="1043" height="577" viewBox="95 155 1043 577">
<line x1="95.00" y1="154.50" x2="1138.00" y2="154.50" stroke="#fafafa" stroke-width="1" />
<path d="M126,706h1v1h-1zM126,651h1v1h-1zM126,596h1v1h-1zM126,541h1v1h-1zM126,486h1v1h-1zM126,431h1v1h-1zM126,376h1v1h-1zM126,322h1v1h-1zM126,267h1v1h-1zM126,212h1v1h-1zM126,157h1v1h-1zM181,706h1v1h-1zM181,651h1v1h-1zM181,596h1v1h-1zM181,541h1v1h-1zM181,486h1v1h-1zM181,431h1v1h-1zM181,376h1v1h-1zM181,322h1v1h-1zM181,267h1v1h-1zM181,212h1v1h-1zM181,157h1v1h-1zM235,706h1v1h-1zM235,651h1v1h-1zM235,596h1v1h-1zM235,541h1v1h-1zM235,486h1v1h-1zM235,431h1v1h-1zM235,376h1v1h-1zM235,322h1v1h-1zM235,267h1v1h-1zM235,212h1v1h-1zM235,157h1v1h-1zM290,706h1v1h-1zM290,651h1v1h-1zM290,596h1v1h-1zM290,541h1v1h-1zM290,486h1v1h-1zM290,431h1v1h-1zM290,376h1v1h-1zM290,322h1v1h-1zM290,267h1v1h-1zM290,212h1v1h-1zM290,157h1v1h-1zM345,706h1v1h-1zM345,651h1v1h-1zM345,596h1v1h-1zM345,541h1v1h-1zM345,486h1v1h-1zM345,431h1v1h-1zM345,376h1v1h-1zM345,322h1v1h-1zM345,267h1v1h-1zM345,212h1v1h-1zM345,157h1v1h-1zM400,706h1v1h-1zM400,651h1v1h-1zM400,596h1v1h-1zM400,541h1v1h-1zM400,486h1v1h-1zM400,431h1v1h-1zM400,376h1v1h-1zM400,322h1v1h-1zM400,267h1v1h-1zM400,212h1v1h-1zM400,157h1v1h-1zM455,706h1v1h-1zM455,651h1v1h-1zM455,596h1v1h-1zM455,541h1v1h-1zM455,486h1v1h-1zM455,431h1v1h-1zM455,376h1v1h-1zM455,322h1v1h-1zM455,267h1v1h-1zM455,212h1v1h-1zM455,157h1v1h-1zM510,706h1v1h-1zM510,651h1v1h-1zM510,596h1v1h-1zM510,541h1v1h-1zM510,486h1v1h-1zM510,431h1v1h-1zM510,376h1v1h-1zM510,322h1v1h-1zM510,267h1v1h-1zM510,212h1v1h-1zM510,157h1v1h-1zM564,706h1v1h-1zM564,651h1v1h-1zM564,596h1v1h-1zM564,541h1v1h-1zM564,486h1v1h-1zM564,431h1v1h-1zM564,376h1v1h-1zM564,322h1v1h-1zM564,267h1v1h-1zM564,212h1v1h-1zM564,157h1v1h-1zM619,706h1v1h-1zM619,651h1v1h-1zM619,596h1v1h-1zM619,541h1v1h-1zM619,486h1v1h-1zM619,431h1v1h-1zM619,376h1v1h-1zM619,322h1v1h-1zM619,267h1v1h-1zM619,212h1v1h-1zM619,157h1v1h-1zM674,706h1v1h-1zM674,651h1v1h-1zM674,596h1v1h-1zM674,541h1v1h-1zM674,486h1v1h-1zM674,431h1v1h-1zM674,376h1v1h-1zM674,322h1v1h-1zM674,267h1v1h-1zM674,212h1v1h-1zM674,157h1v1h-1zM729,706h1v1h-1zM729,651h1v1h-1zM729,596h1v1h-1zM729,541h1v1h-1zM729,486h1v1h-1zM729,431h1v1h-1zM729,376h1v1h-1zM729,322h1v1h-1zM729,267h1v1h-1zM729,212h1v1h-1zM729,157h1v1h-1zM784,706h1v1h-1zM784,651h1v1h-1zM784,596h1v1h-1zM784,541h1v1h-1zM784,486h1v1h-1zM784,431h1v1h-1zM784,376h1v1h-1zM784,322h1v1h-1zM784,267h1v1h-1zM784,212h1v1h-1zM784,157h1v1h-1zM839,706h1v1h-1zM839,651h1v1h-1zM839,596h1v1h-1zM839,541h1v1h-1zM839,486h1v1h-1zM839,431h1v1h-1zM839,376h1v1h-1zM839,322h1v1h-1zM839,267h1v1h-1zM839,212h1v1h-1zM839,157h1v1h-1zM893,706h1v1h-1zM893,651h1v1h-1zM893,596h1v1h-1zM893,541h1v1h-1zM893,486h1v1h-1zM893,431h1v1h-1zM893,376h1v1h-1zM893,322h1v1h-1zM893,267h1v1h-1zM893,212h1v1h-1zM893,157h1v1h-1zM948,706h1v1h-1zM948,651h1v1h-1zM948,596h1v1h-1zM948,541h1v1h-1zM948,486h1v1h-1zM948,431h1v1h-1zM948,376h1v1h-1zM948,322h1v1h-1zM948,267h1v1h-1zM948,212h1v1h-1zM948,157h1v1h-1zM1003,706h1v1h-1zM1003,651h1v1h-1zM1003,596h1v1h-1zM1003,541h1v1h-1zM1003,486h1v1h-1zM1003,431h1v1h-1zM1003,376h1v1h-1zM1003,322h1v1h-1zM1003,267h1v1h-1zM1003,212h1v1h-1zM1003,157h1v1h-1zM1058,706h1v1h-1zM1058,651h1v1h-1zM1058,596h1v1h-1zM1058,541h1v1h-1zM1058,486h1v1h-1zM1058,431h1v1h-1zM1058,376h1v1h-1zM1058,322h1v1h-1zM1058,267h1v1h-1zM1058,212h1v1h-1zM1058,157h1v1h-1zM1113,706h1v1h-1zM1113,651h1v1h-1zM1113,596h1v1h-1zM1113,541h1v1h-1zM1113,486h1v1h-1zM1113,431h1v1h-1zM1113,376h1v1h-1zM1113,322h1v1h-1zM1113,267h1v1h-1zM1113,212h1v1h-1zM1113,157h1v1h-1z" fill="#2c2c2c"/>
<line x1="95.00" y1="595.50" x2="1138.00" y2="595.50" stroke="#1c1c1c" stroke-width="1" />
<line x1="400.50" y1="155.00" x2="400.50" y2="732.00" stroke="#1c1c1c" stroke-width="1" />
<line x1="948.50" y1="155.00" x2="948.50" y2="732.00" stroke="#1c1c1c" stroke-width="1" />
<circle cx="400.5" cy="595.5" r="5" fill="none" stroke="#9a0000" stroke-width="1"/>
<line x1="380.00" y1="595.50" x2="420.50" y2="595.50" stroke="#9a0000" stroke-width="1" />
<line x1="400.50" y1="575.50" x2="400.50" y2="616.00" stroke="#9a0000" stroke-width="1" />
<defs><filter id="bl" x="-50%" y="-50%" width="200%" height="200%"><feGaussianBlur stdDeviation="0.9"/></filter></defs>
<circle cx="696" cy="468.2" r="34.8" fill="none" stroke="#3c4852" stroke-width="9" filter="url(#bl)"/>
<circle cx="696" cy="468.2" r="37.6" fill="none" stroke="#6a7884" stroke-width="1.1" opacity="0.7"/>
<circle cx="696" cy="468.2" r="33" fill="none" stroke="#5e6b76" stroke-width="1.1" opacity="0.6"/>
<line x1="455.18" y1="485.74" x2="729.08" y2="485.74" stroke="#f2f2f2" stroke-width="1.6" />
<line x1="455.18" y1="485.74" x2="455.18" y2="461.09" stroke="#f2f2f2" stroke-width="1.6" />
<line x1="455.18" y1="461.09" x2="463.40" y2="452.87" stroke="#f2f2f2" stroke-width="1.6" />
<line x1="463.40" y1="452.87" x2="720.86" y2="452.87" stroke="#f2f2f2" stroke-width="1.6" />
<line x1="720.86" y1="452.87" x2="729.08" y2="461.09" stroke="#f2f2f2" stroke-width="1.6" />
<line x1="729.08" y1="461.09" x2="729.08" y2="485.74" stroke="#f2f2f2" stroke-width="1.6" />
<line x1="455.18" y1="461.09" x2="729.08" y2="461.09" stroke="#bdbdbd" stroke-width="1.6" />
<line x1="660.06" y1="452.87" x2="663.34" y2="461.09" stroke="#f2f2f2" stroke-width="1.6" />
<line x1="663.34" y1="461.09" x2="663.34" y2="485.74" stroke="#f2f2f2" stroke-width="1.6" />
<line x1="474.35" y1="452.87" x2="474.35" y2="362.48" stroke="#f2f2f2" stroke-width="1.6" />
<line x1="474.35" y1="362.48" x2="482.57" y2="354.27" stroke="#f2f2f2" stroke-width="1.6" />
<line x1="482.57" y1="354.27" x2="559.26" y2="354.27" stroke="#f2f2f2" stroke-width="1.6" />
<line x1="559.26" y1="354.27" x2="567.48" y2="362.48" stroke="#f2f2f2" stroke-width="1.6" />
<line x1="567.48" y1="362.48" x2="567.48" y2="452.87" stroke="#f2f2f2" stroke-width="1.6" />
<line x1="474.35" y1="362.48" x2="567.48" y2="362.48" stroke="#bdbdbd" stroke-width="1.6" />
<line x1="498.50" y1="354.27" x2="498.50" y2="485.74" stroke="#b4b4b4" stroke-width="1.05" stroke-dasharray="10 3.6" stroke-dashoffset="6.6"/>
<line x1="542.50" y1="354.27" x2="542.50" y2="485.74" stroke="#b4b4b4" stroke-width="1.05" stroke-dasharray="10 3.6" stroke-dashoffset="6.6"/>
<line x1="520.50" y1="337.83" x2="520.50" y2="502.17" stroke="#b40c0c" stroke-width="1.1" stroke-dasharray="23 4 5 4" stroke-dashoffset="1.2"/>
<line x1="474.35" y1="294.01" x2="474.35" y2="360.29" stroke="#0a86e0" stroke-width="1.1" />
<line x1="567.48" y1="294.01" x2="567.48" y2="360.29" stroke="#0a86e0" stroke-width="1.1" />
<line x1="474.35" y1="299.49" x2="567.48" y2="299.49" stroke="#0a86e0" stroke-width="1.1" />
<polygon fill="#0a8ff0" points="474.35,299.49 485.85,296.89 485.85,302.09"/>
<polygon fill="#0a8ff0" points="567.48,299.49 555.98,296.89 555.98,302.09"/>
<g transform="translate(508.90,285.20) scale(1.017)" fill="none" stroke="#0a8ff0" stroke-width="1.05"><path transform="translate(0.00,0)" d="M4.4,2.2 C6.9,2.2 8.8,4 8.8,6.6 C8.8,9.2 6.9,10.9 4.4,10.9 C1.9,10.9 0,9.2 0,6.6 C0,4 1.9,2.2 4.4,2.2 Z M5.4,0 L3.4,12.2"/><path transform="translate(11.10,0)" d="M0.2,2.6 L2.8,0.2 L2.8,12"/><path transform="translate(16.40,0)" d="M0,0.2 L6,0.2 L6,0.6 L2.2,12"/></g>
<line x1="499.00" y1="321.40" x2="499.00" y2="351.53" stroke="#0a86e0" stroke-width="1.1" />
<line x1="542.83" y1="321.40" x2="542.83" y2="351.53" stroke="#0a86e0" stroke-width="1.1" />
<line x1="499.00" y1="326.88" x2="542.83" y2="326.88" stroke="#0a86e0" stroke-width="1.1" />
<polygon fill="#0a8ff0" points="499.00,326.88 510.50,324.28 510.50,329.48"/>
<polygon fill="#0a8ff0" points="542.83,326.88 531.33,324.28 531.33,329.48"/>
<g transform="translate(512.30,312.60) scale(1.017)" fill="none" stroke="#0a8ff0" stroke-width="1.05"><path transform="translate(0.00,0)" d="M4.4,2.2 C6.9,2.2 8.8,4 8.8,6.6 C8.8,9.2 6.9,10.9 4.4,10.9 C1.9,10.9 0,9.2 0,6.6 C0,4 1.9,2.2 4.4,2.2 Z M5.4,0 L3.4,12.2"/><path transform="translate(11.10,0)" d="M3,0.1 C4.6,0.1 5.6,1.2 5.6,2.9 C5.6,4.5 4.6,5.6 3,5.6 C1.4,5.6 0.4,4.5 0.4,2.9 C0.4,1.2 1.4,0.1 3,0.1 Z M3,5.6 C4.9,5.6 6,6.8 6,8.8 C6,10.8 4.9,12 3,12 C1.1,12 0,10.8 0,8.8 C0,6.8 1.1,5.6 3,5.6 Z"/></g>
<line x1="420.20" y1="354.27" x2="479.80" y2="354.27" stroke="#0a86e0" stroke-width="1.1" />
<line x1="420.20" y1="485.74" x2="452.30" y2="485.74" stroke="#0a86e0" stroke-width="1.1" />
<line x1="426.15" y1="354.27" x2="426.15" y2="485.74" stroke="#0a86e0" stroke-width="1.1" />
<polygon fill="#0a8ff0" points="426.15,354.27 423.55,365.77 428.75,365.77"/>
<polygon fill="#0a8ff0" points="426.15,485.74 423.55,474.24 428.75,474.24"/>
<g transform="translate(418.10,420.20) rotate(-90) scale(1.017) translate(-7.25,-6)" fill="none" stroke="#0a8ff0" stroke-width="1.05"><path transform="translate(0.00,0)" d="M0.2,2.8 C0.6,1 1.8,0.1 3.2,0.1 C4.8,0.1 5.8,1.3 5.8,2.9 C5.8,4.8 4.2,6.8 0.3,12 L6,12"/><path transform="translate(8.30,0)" d="M4.6,12 L4.6,0.2 L0,8.6 L6.2,8.6"/></g>
<line x1="455.18" y1="488.48" x2="455.18" y2="546.00" stroke="#0a86e0" stroke-width="1.1" />
<line x1="520.92" y1="505.46" x2="520.92" y2="518.61" stroke="#0a86e0" stroke-width="1.1" />
<line x1="455.18" y1="513.13" x2="520.92" y2="513.13" stroke="#0a86e0" stroke-width="1.1" />
<polygon fill="#0a8ff0" points="455.18,513.13 466.68,510.53 466.68,515.73"/>
<polygon fill="#0a8ff0" points="520.92,513.13 509.42,510.53 509.42,515.73"/>
<g transform="translate(481.90,499.20) scale(1.017)" fill="none" stroke="#0a8ff0" stroke-width="1.05"><path transform="translate(0.00,0)" d="M0.2,2.6 L2.8,0.2 L2.8,12"/><path transform="translate(5.30,0)" d="M0.2,2.8 C0.6,1 1.8,0.1 3.2,0.1 C4.8,0.1 5.8,1.3 5.8,2.9 C5.8,4.8 4.2,6.8 0.3,12 L6,12"/></g>
<line x1="663.34" y1="488.48" x2="663.34" y2="518.61" stroke="#0a86e0" stroke-width="1.1" />
<line x1="729.08" y1="488.48" x2="729.08" y2="546.00" stroke="#0a86e0" stroke-width="1.1" />
<line x1="663.34" y1="513.13" x2="729.08" y2="513.13" stroke="#0a86e0" stroke-width="1.1" />
<polygon fill="#0a8ff0" points="663.34,513.13 674.84,510.53 674.84,515.73"/>
<polygon fill="#0a8ff0" points="729.08,513.13 717.58,510.53 717.58,515.73"/>
<g transform="translate(690.60,499.60) scale(1.017)" fill="none" stroke="#0a8ff0" stroke-width="1.05"><path transform="translate(0.00,0)" d="M0.2,2.6 L2.8,0.2 L2.8,12"/><path transform="translate(5.30,0)" d="M0.2,2.8 C0.6,1 1.8,0.1 3.2,0.1 C4.8,0.1 5.8,1.3 5.8,2.9 C5.8,4.8 4.2,6.8 0.3,12 L6,12"/></g>
<line x1="455.18" y1="540.52" x2="729.08" y2="540.52" stroke="#0a86e0" stroke-width="1.1" />
<polygon fill="#0a8ff0" points="455.18,540.52 466.68,537.92 466.68,543.12"/>
<polygon fill="#0a8ff0" points="729.08,540.52 717.58,537.92 717.58,543.12"/>
<g transform="translate(584.50,526.80) scale(1.017)" fill="none" stroke="#0a8ff0" stroke-width="1.05"><path transform="translate(0.00,0)" d="M5.8,0.2 L0.9,0.2 L0.4,5.4 C1.2,4.8 2.1,4.6 3,4.6 C4.9,4.6 6,6.1 6,8.3 C6,10.6 4.7,12 3,12 C1.7,12 0.8,11.4 0.1,10.3"/><path transform="translate(8.30,0)" d="M3,0 C4.8,0 6,2.5 6,6 C6,9.5 4.8,12 3,12 C1.2,12 0,9.5 0,6 C0,2.5 1.2,0 3,0 Z"/></g>
<line x1="723.70" y1="452.87" x2="762.30" y2="452.87" stroke="#0a86e0" stroke-width="1.1" />
<line x1="731.00" y1="485.74" x2="762.30" y2="485.74" stroke="#0a86e0" stroke-width="1.1" />
<line x1="756.47" y1="452.87" x2="756.47" y2="485.74" stroke="#0a86e0" stroke-width="1.1" />
<polygon fill="#0a8ff0" points="756.47,452.87 753.87,464.37 759.07,464.37"/>
<polygon fill="#0a8ff0" points="756.47,485.74 753.87,474.24 759.07,474.24"/>
<g transform="translate(748.20,469.80) rotate(-90) scale(1.017) translate(-3.00,-6)" fill="none" stroke="#0a8ff0" stroke-width="1.05"><path transform="translate(0.00,0)" d="M5.6,1.2 C5,0.4 4.1,0.1 3.2,0.1 C1.1,0.1 0.1,2.9 0.1,7 C0.1,10.2 1.2,12 3.1,12 C4.9,12 6,10.6 6,8.6 C6,6.6 4.9,5.2 3.1,5.2 C1.6,5.2 0.6,6.1 0.1,7.6"/></g>
<path d="M695.8,468.4 L695.8,491.4 L701.2,486.6 L705.9,497.2 L710.6,495 L706,484.9 L712.4,484.5 Z" fill="#fff" stroke="#e8e8e8" stroke-width="3.6" stroke-linejoin="round"/>
<path d="M695.8,468.4 L695.8,491.4 L701.2,486.6 L705.9,497.2 L710.6,495 L706,484.9 L712.4,484.5 Z" fill="#fff" stroke="#000" stroke-width="1.3" stroke-linejoin="round"/>
</svg>
<div class="a" style="left:1153px;top:108px;width:3px;height:690px;background:linear-gradient(90deg,#b4b4b4,#a8a8a8 60%,#c8c8c8)"></div>
<div class="a" style="left:1156px;top:108px;width:298px;height:22px;background:linear-gradient(#ededed,#dedede)"></div>
<div class="a" style="left:1280px;top:112.5px;font-size:12px;line-height:15px;color:#262626">Elenco dei livelli</div>
<div class="a" style="left:1156px;top:130px;width:298px;height:26px;background:linear-gradient(#e6e6e6,#f6f6f6 60%,#f0f0f0)"></div>
<div class="a" style="left:1156px;top:156px;width:298px;height:642px;background:#fff"></div>
<div class="a" style="left:1454px;top:108px;width:46px;height:690px;background:linear-gradient(90deg,#d0d0d0 0,#d0d0d0 1px,#f2f2f2 2px,#e2e2e2 45%,#cbcbcb 93%,#bababa 100%)"></div>
<div class="a" style="left:1px;top:122px;width:35px;height:35px;border:1px solid #9d9d9d;background:linear-gradient(#ececec,#f6f6f6 45%,#f2f2f2 80%,#e9e9e9)"></div>
<div class="a" style="left:36px;top:122px;width:35px;height:35px;border:1px solid #9d9d9d;background:linear-gradient(#ececec,#f6f6f6 45%,#f2f2f2 80%,#e9e9e9)"></div>
<div class="a" style="left:1px;top:157px;width:35px;height:35px;border:1px solid #9d9d9d;background:linear-gradient(#ececec,#f6f6f6 45%,#f2f2f2 80%,#e9e9e9)"></div>
<div class="a" style="left:36px;top:157px;width:35px;height:35px;border:1px solid #9d9d9d;background:linear-gradient(#ececec,#f6f6f6 45%,#f2f2f2 80%,#e9e9e9)"></div>
<div class="a" style="left:1px;top:192px;width:35px;height:35px;border:1px solid #9d9d9d;background:linear-gradient(#ececec,#f6f6f6 45%,#f2f2f2 80%,#e9e9e9)"></div>
<div class="a" style="left:36px;top:192px;width:35px;height:35px;border:1px solid #9d9d9d;background:linear-gradient(#ececec,#f6f6f6 45%,#f2f2f2 80%,#e9e9e9)"></div>
<div class="a" style="left:1px;top:227px;width:35px;height:35px;border:1px solid #9d9d9d;background:linear-gradient(#ececec,#f6f6f6 45%,#f2f2f2 80%,#e9e9e9)"></div>
<div class="a" style="left:36px;top:227px;width:35px;height:35px;border:1px solid #9d9d9d;background:linear-gradient(#ececec,#f6f6f6 45%,#f2f2f2 80%,#e9e9e9)"></div>
<div class="a" style="left:1px;top:262px;width:35px;height:35px;border:1px solid #9d9d9d;background:linear-gradient(#ececec,#f6f6f6 45%,#f2f2f2 80%,#e9e9e9)"></div>
<div class="a" style="left:1px;top:305px;width:35px;height:35px;border:1px solid #9d9d9d;background:linear-gradient(#ececec,#f6f6f6 45%,#f2f2f2 80%,#e9e9e9)"></div>
<div class="a" style="left:36px;top:305px;width:35px;height:35px;border:1px solid #9d9d9d;background:linear-gradient(#ececec,#f6f6f6 45%,#f2f2f2 80%,#e9e9e9)"></div>
<div class="a" style="left:1px;top:340px;width:35px;height:35px;border:1px solid #9d9d9d;background:linear-gradient(#ececec,#f6f6f6 45%,#f2f2f2 80%,#e9e9e9)"></div>
<div class="a" style="left:1px;top:383px;width:35px;height:35px;border:1px solid #9d9d9d;background:linear-gradient(#ececec,#f6f6f6 45%,#f2f2f2 80%,#e9e9e9)"></div>
<div class="a" style="left:36px;top:383px;width:35px;height:35px;border:1px solid #9d9d9d;background:linear-gradient(#ececec,#f6f6f6 45%,#f2f2f2 80%,#e9e9e9)"></div>
<div class="a" style="left:1px;top:418px;width:35px;height:35px;border:1px solid #9d9d9d;background:linear-gradient(#ececec,#f6f6f6 45%,#f2f2f2 80%,#e9e9e9)"></div>
<div class="a" style="left:36px;top:418px;width:35px;height:35px;border:1px solid #9d9d9d;background:linear-gradient(#ececec,#f6f6f6 45%,#f2f2f2 80%,#e9e9e9)"></div>
<div class="a" style="left:1px;top:461px;width:35px;height:35px;border:1px solid #9d9d9d;background:linear-gradient(#ececec,#f6f6f6 45%,#f2f2f2 80%,#e9e9e9)"></div>
<svg class="a" style="left:0;top:108px" width="72" height="400" viewBox="0 108 72 400">
<rect x="7" y="116" width="2" height="2" fill="#a2a2a2"/>
<rect x="13" y="116" width="2" height="2" fill="#a2a2a2"/>
<rect x="19" y="116" width="2" height="2" fill="#a2a2a2"/>
<rect x="25" y="116" width="2" height="2" fill="#a2a2a2"/>
<rect x="31" y="116" width="2" height="2" fill="#a2a2a2"/>
<rect x="37" y="116" width="2" height="2" fill="#a2a2a2"/>
<rect x="43" y="116" width="2" height="2" fill="#a2a2a2"/>
<rect x="49" y="116" width="2" height="2" fill="#a2a2a2"/>
<rect x="55" y="116" width="2" height="2" fill="#a2a2a2"/>
<rect x="61" y="116" width="2" height="2" fill="#a2a2a2"/>
<path d="M7.800000000000001,131.5 h7 M11.3,128.0 v7" stroke="#000" stroke-width="1.1"/>
<path d="M21.8,140.5 h7 M25.3,137.0 v7" stroke="#000" stroke-width="1.1"/>
<path d="M8.7,146.7 h7 M12.2,143.2 v7" stroke="#000" stroke-width="1.1"/>
<line x1="41.7" y1="144.6" x2="65.1" y2="134" fill="none" stroke="#1a1a1a" stroke-width="1.1"/>
<path d="M7.4,182.7 A19.5,19.5 0 0 1 27,163.4" fill="none" stroke="#1a1a1a" stroke-width="1.1"/>
<circle cx="52.4" cy="173.1" r="9.6" fill="none" stroke="#1a1a1a" stroke-width="1.1"/>
<ellipse cx="17.9" cy="208.9" rx="14.3" ry="5.4" transform="rotate(-43 17.9 208.9)" fill="none" stroke="#1a1a1a" stroke-width="1.1"/>
<path d="M42.3,200.5 C47,198.5 52,203 56,207 C60,211 64,213.5 64.3,209 C64.5,203 62.5,198 61,199.5 C58.5,201.5 57,204 56,207 C53,213 50.5,219 47.7,218.4 C44.5,217.5 41.5,207 42.3,200.5 Z" fill="none" stroke="#1a1a1a" stroke-width="1.1"/>
<path d="M13.5,239.6 C10.3,239.6 8.8,242 8.8,244 C8.8,246.5 10.5,248 13,248 L28,248" fill="none" stroke="#1a1a1a" stroke-width="1.1"/>
<path d="M40.2,238.2 L43,232 L51.2,232 L54.6,238.2 L51.2,244.3 L43,244.3 Z" fill="none" stroke="#1a1a1a" stroke-width="1.1"/>
<path d="M60.7,236.6 L55.3,245 L66.2,245 Z" fill="none" stroke="#1a1a1a" stroke-width="1.1"/>
<rect x="40.9" y="248.8" width="14.8" height="6.9" fill="none" stroke="#1a1a1a" stroke-width="1.1"/>
<defs><pattern id="hp" width="2.6" height="2.6" patternUnits="userSpaceOnUse" patternTransform="rotate(-45)"><rect width="2.6" height="2.6" fill="#e8e8e8"/><rect width="0.9" height="2.6" fill="#6a6a6a"/></pattern></defs>
<path d="M10.9,272.3 L28.4,272.3 L28.4,286.6 L7.5,286.6 L7.5,279.1 Z" fill="url(#hp)" stroke="#1a1a1a" stroke-width="1.1"/>
<circle cx="20.5" cy="279.8" r="3.3" fill="#f0f0f0" stroke="#1a1a1a" stroke-width="1"/>
<text x="18" y="331.7" text-anchor="middle" font-family="Liberation Serif" font-size="27" fill="#000">A</text>
<path d="M43.8,314.4 v15.4 M61.6,314.4 v15.4 M44,316.6 h17.4" stroke="#1a1a1a" stroke-width="1.2" fill="none"/>
<path d="M44.2,316.6 l4,-2 v4 Z M61.2,316.6 l-4,-2 v4 Z" fill="#1a1a1a"/>
<rect x="7.3" y="349" width="21.3" height="16" fill="#fff" stroke="#000" stroke-width="1.6"/>
<path d="M9,363.5 L13.5,357 L16.5,360 L20,355.5 L27,363.5 Z" fill="#000"/>
<circle cx="24.6" cy="352.6" r="1.5" fill="#000"/>
<path d="M5.3,393.3 L5.3,412.3 L24.6,412.3 Z" fill="none" stroke="#111" stroke-width="1.3"/>
<path d="M9,403.5 L9,409 L14.6,409 Z" fill="none" stroke="#111" stroke-width="1.1"/>
<g transform="translate(15.3,393.5) rotate(40)"><rect x="-6.5" y="-2.2" width="11" height="4.4" fill="#e02020" stroke="#801010" stroke-width="0.6"/><path d="M4.5,-2.2 L7.5,0 L4.5,2.2 Z" fill="#e8c090"/></g>
<path d="M26.2,387.2 L23,405.5 M26.2,387.2 L29,405.5 M24.7,396 h3" stroke="#111" stroke-width="1.1" fill="none"/>
<circle cx="26.2" cy="388.5" r="1.2" fill="#111"/>
<rect x="41" y="396.3" width="23.6" height="7.6" rx="1.5" fill="#fafafa" stroke="#222" stroke-width="1"/>
<path d="M43.0,397 v2.6 M44.8,397 v1.6 M46.6,397 v1.6 M48.4,397 v1.6 M50.2,397 v1.6 M52.0,397 v2.6 M53.8,397 v1.6 M55.6,397 v1.6 M57.4,397 v1.6 M59.2,397 v1.6 M61.0,397 v2.6 M62.8,397 v1.6 " stroke="#333" stroke-width="0.6"/>
<rect x="7.8" y="425.3" width="16.8" height="12.5" fill="#f2ecd4" stroke="#8a8a8a" stroke-width="1"/>
<circle cx="21.9" cy="437" r="6.8" fill="#f2ecd4" fill-opacity="0.7" stroke="#8a8a8a" stroke-width="1"/>
<circle cx="7.8" cy="437.8" r="1.3" fill="#f07070"/>
<line x1="41.6" y1="433.2" x2="58.6" y2="423.9" stroke="#f02020" stroke-width="1.3"/>
<path d="M51.6,429.4 L51.6,441 L54.2,438.8 L56.4,443.4 L58,442.6 L56,438.1 L59.3,437.9 Z" fill="#fff" stroke="#555" stroke-width="0.9" stroke-linejoin="round"/>
<path d="M7.5,473.5 L19,467.3 L28.5,472 L28.5,483 L17,489 L7.5,484 Z M7.5,473.5 L17,478.5 L28.5,472 M17,478.5 L17,489" fill="none" stroke="#1a1a1a" stroke-width="1.2" stroke-linejoin="round"/>
<path d="M31.2,152 L31.2,147 L26.2,152 Z" fill="#000"/>
<path d="M66.2,152 L66.2,147 L61.2,152 Z" fill="#000"/>
<path d="M31.2,187 L31.2,182 L26.2,187 Z" fill="#000"/>
<path d="M66.2,187 L66.2,182 L61.2,187 Z" fill="#000"/>
<path d="M31.2,222 L31.2,217 L26.2,222 Z" fill="#000"/>
<path d="M66.2,222 L66.2,217 L61.2,222 Z" fill="#000"/>
<path d="M31.2,257 L31.2,252 L26.2,257 Z" fill="#000"/>
<path d="M66.2,257 L66.2,252 L61.2,257 Z" fill="#000"/>
<path d="M31.2,292 L31.2,287 L26.2,292 Z" fill="#000"/>
<path d="M66.2,335 L66.2,330 L61.2,335 Z" fill="#000"/>
<path d="M31.2,413 L31.2,408 L26.2,413 Z" fill="#000"/>
<path d="M66.2,448 L66.2,443 L61.2,448 Z" fill="#000"/>
<path d="M31.2,491 L31.2,486 L26.2,491 Z" fill="#000"/>
</svg>
<div class="a" style="left:1156.0px;top:130px;width:60px;height:26px;border:1.5px solid #a6a6a6;background:linear-gradient(#e4e4e4,#f4f4f4 70%,#f2f2f2)"></div>
<div class="a" style="left:1215.8px;top:130px;width:60px;height:26px;border:1.5px solid #a6a6a6;background:linear-gradient(#e4e4e4,#f4f4f4 70%,#f2f2f2)"></div>
<div class="a" style="left:1275.6px;top:130px;width:60px;height:26px;border:1.5px solid #a6a6a6;background:linear-gradient(#e4e4e4,#f4f4f4 70%,#f2f2f2)"></div>
<div class="a" style="left:1335.4px;top:130px;width:60px;height:26px;border:1.5px solid #a6a6a6;background:linear-gradient(#e4e4e4,#f4f4f4 70%,#f2f2f2)"></div>
<div class="a" style="left:1395.2px;top:130px;width:60px;height:26px;border:1.5px solid #a6a6a6;background:linear-gradient(#e4e4e4,#f4f4f4 70%,#f2f2f2)"></div>
<svg class="a" style="left:1154px;top:108px" width="300" height="150" viewBox="1154 108 300 150">
<circle cx="1164" cy="118" r="7" fill="#6e6e6e"/><path d="M1161,115 L1167,121 M1167,115 L1161,121" stroke="#fff" stroke-width="1.8"/>
<circle cx="1181.8" cy="118" r="7" fill="#6e6e6e"/>
<rect x="1179.5" y="114.6" width="5.3" height="4.4" fill="none" stroke="#fff" stroke-width="1"/><rect x="1177.6" y="117" width="5.3" height="4.4" fill="#6e6e6e" stroke="#fff" stroke-width="1"/>
<g transform="translate(1185,142.8) scale(1.0)"><path d="M-7.6,0.6 Q-5,-5.6 0.3,-5.6 Q5.4,-5.6 7.6,0.2 Q6.5,1.2 5.6,1.6 Q3.8,5.4 0,5.4 Q-4,5.4 -5.8,1.6 Q-6.8,1.2 -7.6,0.6 Z" fill="#000"/><path d="M-4.6,1 Q-3,-2.2 0.2,-2.2 Q3.4,-2.2 4.7,1 Q3,3.7 0,3.7 Q-3,3.7 -4.6,1 Z" fill="#fff"/><circle cx="0" cy="0.7" r="2.6" fill="#000"/><circle cx="-0.7" cy="-0.1" r="0.7" fill="#fff"/></g>
<g transform="translate(1245,142.8) scale(1.0)"><path d="M-7.6,0.6 Q-5,-5.6 0.3,-5.6 Q5.4,-5.6 7.6,0.2 Q6.5,1.2 5.6,1.6 Q3.8,5.4 0,5.4 Q-4,5.4 -5.8,1.6 Q-6.8,1.2 -7.6,0.6 Z" fill="#a0a0a0"/><path d="M-4.6,1 Q-3,-2.2 0.2,-2.2 Q3.4,-2.2 4.7,1 Q3,3.7 0,3.7 Q-3,3.7 -4.6,1 Z" fill="#fff"/><circle cx="0" cy="0.7" r="2.6" fill="#a0a0a0"/><circle cx="-0.7" cy="-0.1" r="0.7" fill="#fff"/></g>
<path d="M1305,136.8 v12 M1299,142.8 h12" stroke="#401010" stroke-width="3.6"/><path d="M1305,137.3 v11 M1299.5,142.8 h11" stroke="#f00000" stroke-width="2.4"/>
<path d="M1359,142.8 h12" stroke="#401010" stroke-width="3.6"/><path d="M1359.5,142.8 h11" stroke="#f00000" stroke-width="2.4"/>
<g transform="translate(1418,150) rotate(-45.6)"><path d="M0,0 L3.5,-1.6 L18.219314660480457,-1.6 L18.219314660480457,1.6 L3.5,1.6 Z" fill="#e8a838" stroke="#8a5a10" stroke-width="0.6"/><path d="M0,0 L3.5,-1.6 L3.5,1.6 Z" fill="#f0d8a8"/><path d="M0,0 L1.4,-0.6 L1.4,0.6 Z" fill="#333"/><rect x="17.219314660480457" y="-1.6" width="3.5" height="3.2" rx="1" fill="#e82020"/></g>
<rect x="1161.5" y="163.8" width="15" height="8" fill="#fff" stroke="#000" stroke-width="1"/>
<g transform="translate(1422.9,167.10000000000002) scale(1.0)"><path d="M-7.6,0.6 Q-5,-5.6 0.3,-5.6 Q5.4,-5.6 7.6,0.2 Q6.5,1.2 5.6,1.6 Q3.8,5.4 0,5.4 Q-4,5.4 -5.8,1.6 Q-6.8,1.2 -7.6,0.6 Z" fill="#000"/><path d="M-4.6,1 Q-3,-2.2 0.2,-2.2 Q3.4,-2.2 4.7,1 Q3,3.7 0,3.7 Q-3,3.7 -4.6,1 Z" fill="#fff"/><circle cx="0" cy="0.7" r="2.6" fill="#000"/><circle cx="-0.7" cy="-0.1" r="0.7" fill="#fff"/></g>
<path d="M1441.8,167.60000000000002 v-3 a3.2,3.2 0 0 1 6.4,0 v3" fill="none" stroke="#b9b9b9" stroke-width="1.6"/>
<rect x="1440.2" y="166.9" width="9.6" height="7" rx="0.6" fill="#b9b9b9"/>
<rect x="1161.5" y="183.8" width="15" height="8" fill="#ff0000" stroke="#000" stroke-width="1"/>
<g transform="translate(1422.9,187.10000000000002) scale(1.0)"><path d="M-7.6,0.6 Q-5,-5.6 0.3,-5.6 Q5.4,-5.6 7.6,0.2 Q6.5,1.2 5.6,1.6 Q3.8,5.4 0,5.4 Q-4,5.4 -5.8,1.6 Q-6.8,1.2 -7.6,0.6 Z" fill="#000"/><path d="M-4.6,1 Q-3,-2.2 0.2,-2.2 Q3.4,-2.2 4.7,1 Q3,3.7 0,3.7 Q-3,3.7 -4.6,1 Z" fill="#fff"/><circle cx="0" cy="0.7" r="2.6" fill="#000"/><circle cx="-0.7" cy="-0.1" r="0.7" fill="#fff"/></g>
<path d="M1441.8,187.60000000000002 v-3 a3.2,3.2 0 0 1 6.4,0 v3" fill="none" stroke="#b9b9b9" stroke-width="1.6"/>
<rect x="1440.2" y="186.9" width="9.6" height="7" rx="0.6" fill="#b9b9b9"/>
<rect x="1161.5" y="203.8" width="15" height="8" fill="#fff" stroke="#000" stroke-width="1"/>
<g transform="translate(1422.9,207.10000000000002) scale(1.0)"><path d="M-7.6,0.6 Q-5,-5.6 0.3,-5.6 Q5.4,-5.6 7.6,0.2 Q6.5,1.2 5.6,1.6 Q3.8,5.4 0,5.4 Q-4,5.4 -5.8,1.6 Q-6.8,1.2 -7.6,0.6 Z" fill="#000"/><path d="M-4.6,1 Q-3,-2.2 0.2,-2.2 Q3.4,-2.2 4.7,1 Q3,3.7 0,3.7 Q-3,3.7 -4.6,1 Z" fill="#fff"/><circle cx="0" cy="0.7" r="2.6" fill="#000"/><circle cx="-0.7" cy="-0.1" r="0.7" fill="#fff"/></g>
<path d="M1441.8,207.60000000000002 v-3 a3.2,3.2 0 0 1 6.4,0 v3" fill="none" stroke="#b9b9b9" stroke-width="1.6"/>
<rect x="1440.2" y="206.9" width="9.6" height="7" rx="0.6" fill="#b9b9b9"/>
<rect x="1161.5" y="223.8" width="15" height="8" fill="#0a8ff5" stroke="#000" stroke-width="1"/>
<g transform="translate(1422.9,227.10000000000002) scale(1.0)"><path d="M-7.6,0.6 Q-5,-5.6 0.3,-5.6 Q5.4,-5.6 7.6,0.2 Q6.5,1.2 5.6,1.6 Q3.8,5.4 0,5.4 Q-4,5.4 -5.8,1.6 Q-6.8,1.2 -7.6,0.6 Z" fill="#000"/><path d="M-4.6,1 Q-3,-2.2 0.2,-2.2 Q3.4,-2.2 4.7,1 Q3,3.7 0,3.7 Q-3,3.7 -4.6,1 Z" fill="#fff"/><circle cx="0" cy="0.7" r="2.6" fill="#000"/><circle cx="-0.7" cy="-0.1" r="0.7" fill="#fff"/></g>
<path d="M1441.8,227.60000000000002 v-3 a3.2,3.2 0 0 1 6.4,0 v3" fill="none" stroke="#b9b9b9" stroke-width="1.6"/>
<rect x="1440.2" y="226.9" width="9.6" height="7" rx="0.6" fill="#b9b9b9"/>
<rect x="1161.5" y="243.8" width="15" height="8" fill="#000" stroke="#000" stroke-width="1"/>
<g transform="translate(1422.9,247.10000000000002) scale(1.0)"><path d="M-7.6,0.6 Q-5,-5.6 0.3,-5.6 Q5.4,-5.6 7.6,0.2 Q6.5,1.2 5.6,1.6 Q3.8,5.4 0,5.4 Q-4,5.4 -5.8,1.6 Q-6.8,1.2 -7.6,0.6 Z" fill="#000"/><path d="M-4.6,1 Q-3,-2.2 0.2,-2.2 Q3.4,-2.2 4.7,1 Q3,3.7 0,3.7 Q-3,3.7 -4.6,1 Z" fill="#fff"/><circle cx="0" cy="0.7" r="2.6" fill="#000"/><circle cx="-0.7" cy="-0.1" r="0.7" fill="#fff"/></g>
<path d="M1441.8,247.60000000000002 v-3 a3.2,3.2 0 0 1 6.4,0 v3" fill="none" stroke="#b9b9b9" stroke-width="1.6"/>
<rect x="1440.2" y="246.9" width="9.6" height="7" rx="0.6" fill="#b9b9b9"/>
<g transform="translate(1394.5,193.5) rotate(-44.4)"><path d="M0,0 L3.5,-1.6 L16.380942773071467,-1.6 L16.380942773071467,1.6 L3.5,1.6 Z" fill="#e8a838" stroke="#8a5a10" stroke-width="0.6"/><path d="M0,0 L3.5,-1.6 L3.5,1.6 Z" fill="#f0d8a8"/><path d="M0,0 L1.4,-0.6 L1.4,0.6 Z" fill="#333"/><rect x="15.380942773071467" y="-1.6" width="3.5" height="3.2" rx="1" fill="#e82020"/></g>
</svg>
<div class="lay" style="top:160px">0</div>
<div class="lay" style="top:180px">Center</div>
<div class="lay" style="top:200px">Defpoints</div>
<div class="lay" style="top:220px">Dimensions</div>
<div class="lay" style="top:240px">Hidden</div>
<svg class="a" style="left:1454px;top:108px" width="46" height="400" viewBox="1454 108 46 400">
<rect x="1462.5" y="116" width="2" height="2" fill="#a0a0a0"/>
<rect x="1467.5" y="116" width="2" height="2" fill="#a0a0a0"/>
<rect x="1472.5" y="116" width="2" height="2" fill="#a0a0a0"/>
<rect x="1477.5" y="116" width="2" height="2" fill="#a0a0a0"/>
<rect x="1482.5" y="116" width="2" height="2" fill="#a0a0a0"/>
<rect x="1487.5" y="116" width="2" height="2" fill="#a0a0a0"/>
<rect x="1459" y="261" width="1" height="1" fill="#707070"/><rect x="1462" y="261" width="1" height="1" fill="#707070"/><rect x="1465" y="261" width="1" height="1" fill="#707070"/><rect x="1468" y="261" width="1" height="1" fill="#707070"/><rect x="1471" y="261" width="1" height="1" fill="#707070"/><rect x="1474" y="261" width="1" height="1" fill="#707070"/><rect x="1477" y="261" width="1" height="1" fill="#707070"/><rect x="1480" y="261" width="1" height="1" fill="#707070"/><rect x="1483" y="261" width="1" height="1" fill="#707070"/><rect x="1486" y="261" width="1" height="1" fill="#707070"/><rect x="1489" y="261" width="1" height="1" fill="#707070"/><rect x="1492" y="261" width="1" height="1" fill="#707070"/><rect x="1495" y="261" width="1" height="1" fill="#707070"/><rect x="1498" y="261" width="1" height="1" fill="#707070"/>
<rect x="1459" y="409" width="1" height="1" fill="#707070"/><rect x="1462" y="409" width="1" height="1" fill="#707070"/><rect x="1465" y="409" width="1" height="1" fill="#707070"/><rect x="1468" y="409" width="1" height="1" fill="#707070"/><rect x="1471" y="409" width="1" height="1" fill="#707070"/><rect x="1474" y="409" width="1" height="1" fill="#707070"/><rect x="1477" y="409" width="1" height="1" fill="#707070"/><rect x="1480" y="409" width="1" height="1" fill="#707070"/><rect x="1483" y="409" width="1" height="1" fill="#707070"/><rect x="1486" y="409" width="1" height="1" fill="#707070"/><rect x="1489" y="409" width="1" height="1" fill="#707070"/><rect x="1492" y="409" width="1" height="1" fill="#707070"/><rect x="1495" y="409" width="1" height="1" fill="#707070"/><rect x="1498" y="409" width="1" height="1" fill="#707070"/>
<rect x="1456.7" y="120.2" width="41.2" height="42" rx="6" fill="#b6b6b6"/>
<rect x="1456.7" y="417" width="41.2" height="42.8" rx="6" fill="#b6b6b6"/>
<g transform="translate(1463,127.4)"><rect x="0.5" y="0.5" width="27" height="26.5" fill="#fff" stroke="#222" stroke-width="1"/><rect x="0.5" y="0.5" width="27" height="4.5" fill="#000"/><rect x="1.6" y="1.4" width="3" height="3" fill="#fff"/><path d="M9,12 L14,10 L14,21 L9,23 Z" fill="#888" stroke="#444" stroke-width="0.6"/><path d="M11,11 L19,8.5 L19,19.5 L11,22 Z" fill="#ddd" stroke="#555" stroke-width="0.6"/><path d="M14,10 L22,7.5 L22,18.5 L14,21 Z" fill="#fff" stroke="#555" stroke-width="0.6"/><path d="M15.5,18 L19,11 L20,17 Z" fill="none" stroke="#e03030" stroke-width="0.9"/></g>
<g transform="translate(1463,174.3)"><rect x="0.5" y="0.5" width="27" height="26.5" fill="#fff" stroke="#222" stroke-width="1"/><rect x="0.5" y="0.5" width="27" height="4.5" fill="#000"/><rect x="1.6" y="1.4" width="3" height="3" fill="#fff"/><rect x="7" y="10.5" width="10" height="8" fill="#f0e4b8" stroke="#555" stroke-width="0.8"/><circle cx="16.5" cy="18" r="5" fill="#f0e4b8" fill-opacity="0.8" stroke="#555" stroke-width="0.8"/></g>
<g transform="translate(1463,219.8)"><rect x="0.5" y="0.5" width="27" height="26.5" fill="#fff" stroke="#222" stroke-width="1"/><rect x="0.5" y="0.5" width="27" height="4.5" fill="#000"/><rect x="1.6" y="1.4" width="3" height="3" fill="#fff"/><rect x="5.5" y="10" width="17" height="11" rx="2" fill="#f4f4f4" stroke="#b8c8e0" stroke-width="0.8"/></g>
<g transform="translate(1463,276.3)"><rect x="0.5" y="0.5" width="27" height="26.5" fill="#fff" stroke="#222" stroke-width="1"/><rect x="0.5" y="0.5" width="27" height="4.5" fill="#000"/><rect x="1.6" y="1.4" width="3" height="3" fill="#fff"/><rect x="4" y="9" width="3.5" height="2.5" fill="#000"/><rect x="4" y="14" width="3.5" height="2.5" fill="#000"/><rect x="4" y="19" width="3.5" height="2.5" fill="#000"/><rect x="10" y="8.8" width="14" height="3" fill="none" stroke="#222" stroke-width="0.7"/><rect x="10" y="13.8" width="14" height="3" fill="none" stroke="#222" stroke-width="0.7"/><rect x="10" y="18.8" width="14" height="3" fill="none" stroke="#222" stroke-width="0.7"/></g>
<g transform="translate(1463,321.8)"><rect x="0.5" y="0.5" width="27" height="26.5" fill="#fff" stroke="#222" stroke-width="1"/><rect x="0.5" y="0.5" width="27" height="4.5" fill="#000"/><rect x="1.6" y="1.4" width="3" height="3" fill="#fff"/><path d="M7,10 Q14,8 21,10 L15.5,15.5 L15.5,22 L13,20 L13,15.5 Z" fill="#909090" stroke="#555" stroke-width="0.6"/></g>
<g transform="translate(1463,368.3)"><rect x="0.5" y="0.5" width="27" height="26.5" fill="#fff" stroke="#222" stroke-width="1"/><rect x="0.5" y="0.5" width="27" height="4.5" fill="#000"/><rect x="1.6" y="1.4" width="3" height="3" fill="#fff"/><path d="M6,8.5 L11,12 L11,19 L6,22.5 Z" fill="#fff" stroke="#333" stroke-width="0.7"/><rect x="11" y="12" width="11" height="7" rx="1.5" fill="#909090"/><path d="M4,15.5 h20" stroke="#f08080" stroke-width="0.8" stroke-dasharray="1.5 1"/></g>
<g transform="translate(1463,424.3)"><rect x="0.5" y="0.5" width="27" height="26.5" fill="#fff" stroke="#222" stroke-width="1"/><rect x="0.5" y="0.5" width="27" height="4.5" fill="#000"/><rect x="1.6" y="1.4" width="3" height="3" fill="#fff"/><path d="M3,9 h10 M3,12 h9 M3,15 h10 M3,18 h10" stroke="#999" stroke-width="0.7"/><path d="M0.5,21.5 h27" stroke="#222" stroke-width="0.8"/><path d="M3,24.2 h3 M9,24.2 h14" stroke="#555" stroke-width="0.8"/></g>
<g transform="translate(1463,471.2)"><rect x="0.5" y="0.5" width="27" height="26.5" fill="#fff" stroke="#222" stroke-width="1"/><rect x="0.5" y="0.5" width="27" height="4.5" fill="#000"/><rect x="1.6" y="1.4" width="3" height="3" fill="#fff"/><rect x="8.5" y="9.5" width="11" height="13" fill="#c8882a" stroke="#9a6414" stroke-width="0.6"/><rect x="10" y="11" width="8" height="10.5" fill="#f8f8f8"/><rect x="11" y="8.5" width="6" height="3" fill="#909088"/></g>
</svg>
<svg class="a" style="left:72px;top:108px" width="60" height="24" viewBox="72 108 60 24">
<path d="M79,116 L87,124 M87,116 L79,124" stroke="#5a5a5a" stroke-width="1.1"/>
<defs><linearGradient id="gRing" x1="0" y1="0" x2="1" y2="1"><stop offset="0" stop-color="#7a90c0"/><stop offset="0.6" stop-color="#1e3c8a"/></linearGradient></defs>
<circle cx="102.2" cy="118.6" r="5.6" fill="#f2f2f2" stroke="url(#gRing)" stroke-width="2.4"/>
<path d="M98.5,117.5 L104,115.5 M99,120 L105,119" stroke="#d88" stroke-width="0.5"/>
<path d="M102,119.5 L107,124" stroke="#f0a018" stroke-width="2"/><circle cx="107.6" cy="124.6" r="1.1" fill="#e06060"/>
</svg>
<div class="a" style="left:0;top:798px;width:1500px;height:46px;background:#dcdcdc"></div>
<div class="st" style="left:2px;top:806.5px;letter-spacing:0.38px">53.9598,23.1491</div>
<div class="st" style="left:2px;top:826.5px;letter-spacing:0.38px">@53.9598,23.1491</div>
<div class="a" style="left:253px;top:802px;width:1px;height:40px;background:#707070"></div>
<div class="a" style="left:254px;top:802px;width:1px;height:40px;background:#f8f8f8"></div>
<div class="st" style="left:256px;top:806.5px;letter-spacing:0.38px">58.7158&lt;23°</div>
<div class="st" style="left:256px;top:826.5px;letter-spacing:0.38px">@58.7158&lt;23°</div>
<div class="a" style="left:506px;top:819px;width:7px;height:7px;border-radius:50%;background:#c6c6c6"></div>
<div class="st" style="left:571.5px;top:816px;letter-spacing:0.2px">Selezionare entità o regione</div>
<svg class="a" style="left:710px;top:800px" width="32" height="40" viewBox="710 800 32 40"><rect x="717.6" y="806.4" width="17" height="28.7" rx="8.5" fill="#fff" stroke="#484848" stroke-width="1"/><path d="M717.6,819.6 Q726.1,817.6 734.6,819.6" fill="none" stroke="#404040" stroke-width="1.4"/><path d="M726.1,806.4 V818.4" stroke="#404040" stroke-width="1"/><rect x="724.3" y="808.8" width="3.6" height="6.8" rx="1.6" fill="#fff" stroke="#404040" stroke-width="1"/></svg>
<div class="a" style="left:940px;top:819px;width:7px;height:7px;border-radius:50%;background:#c6c6c6"></div>
<div class="st" style="left:949px;top:816px;letter-spacing:0.22px">Nessun entità selezionate.</div>
<div class="a" style="left:1269px;top:819px;width:7px;height:7px;border-radius:50%;background:#c6c6c6"></div>
</body></html>
